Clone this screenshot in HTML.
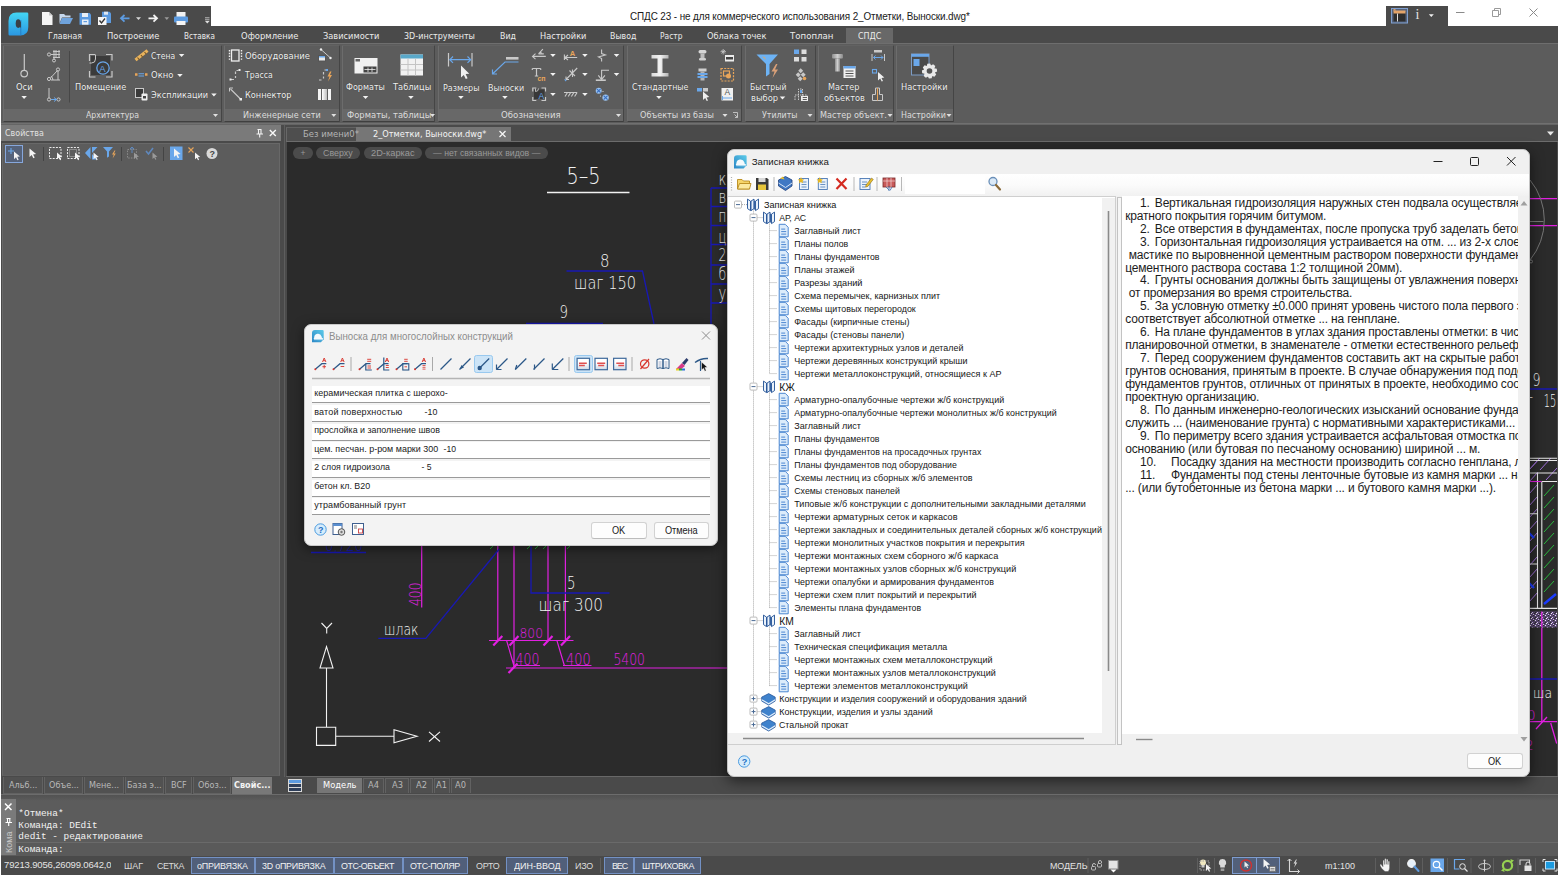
<!DOCTYPE html>
<html lang="ru"><head><meta charset="utf-8"><title>СПДС 23</title><style>
html,body{margin:0;padding:0}
body{width:1560px;height:877px;background:#fff;position:relative;overflow:hidden;font-family:"Liberation Sans",sans-serif;}
.t{position:absolute;white-space:pre;margin:0;padding:0;z-index:3}
.r{position:absolute;box-sizing:border-box}
svg{overflow:visible}
svg text{font-family:"Liberation Sans",sans-serif}
svg text.cad{font-family:"DejaVu Sans","Liberation Sans",sans-serif;font-weight:200}
</style></head><body>
<div class="r" style="left:1px;top:26px;width:1557px;height:849px;background:#4a4a4a;"></div>
<div class="r" style="left:1px;top:6px;width:210px;height:21px;background:#4a4a4a;"></div>
<div class="r" style="left:1386px;top:6px;width:62px;height:21px;background:#4a4a4a;"></div>
<div class="t " style="left:630.0px;top:10px;font-size:11.09px;line-height:12px;color:#1a1a1a;letter-spacing:-0.112px;transform:scale(0.8929,1.0000);transform-origin:0 50%;">СПДС 23 - не для коммерческого использования 2_Отметки, Выноски.dwg*</div>
<svg class="r" style="left:1462px;top:8px;" width="90" height="16" viewBox="0 0 90 16"><path d="M-6 4.500h8.500" stroke="#8a8a8a" fill="none"/><path d="M30.500 2.500h6v6h-6z M32.500 2.500v-2h6v6h-2" stroke="#9a9a9a" fill="none"/><path d="M67.5 0.5l8 8m0-8l-8 8" stroke="#8a8a8a" fill="none"/></svg>
<svg class="r" style="left:8px;top:12px;" width="21" height="24" viewBox="0 0 21 24"><defs><linearGradient id="lg" x1="0" y1="0" x2="0" y2="1"><stop offset="0" stop-color="#43d6f4"/><stop offset="1" stop-color="#2b97e2"/></linearGradient></defs><path d="M8.500 0.500h10.500q1.300 0 1.300 1.300v13.200q0 8.500-8.500 8.500h-10q-1.300 0-1.300-1.300v-13.200q0-8.500 8-8.500z" fill="url(#lg)"/><ellipse cx="10.200" cy="11.600" rx="2.500" ry="4.300" fill="#3a4047"/><path d="M12.800 8v15.500" stroke="#2a7fc4" stroke-width="1"/><path d="M12.300 9.500v6" stroke="#3a4047" stroke-width="1.200"/></svg>
<div class="r" style="left:846px;top:28px;width:47px;height:16px;background:#686868;"></div>
<div class="t " style="left:48.0px;top:31.0px;font-size:8.70px;line-height:10px;color:#ececec;letter-spacing:0.020px;font-family:'DejaVu Sans','Liberation Sans',sans-serif;transform:scale(0.9014,1.0000);transform-origin:0 50%;">Главная</div>
<div class="t " style="left:106.5px;top:31.0px;font-size:8.70px;line-height:10px;color:#ececec;letter-spacing:0.020px;font-family:'DejaVu Sans','Liberation Sans',sans-serif;transform:scale(0.9579,1.0000);transform-origin:0 50%;">Построение</div>
<div class="t " style="left:184.0px;top:31.0px;font-size:8.70px;line-height:10px;color:#ececec;letter-spacing:0.020px;font-family:'DejaVu Sans','Liberation Sans',sans-serif;transform:scale(0.8377,1.0000);transform-origin:0 50%;">Вставка</div>
<div class="t " style="left:240.5px;top:31.0px;font-size:8.70px;line-height:10px;color:#ececec;letter-spacing:0.020px;font-family:'DejaVu Sans','Liberation Sans',sans-serif;transform:scale(0.9663,1.0000);transform-origin:0 50%;">Оформление</div>
<div class="t " style="left:322.5px;top:31.0px;font-size:8.70px;line-height:10px;color:#ececec;letter-spacing:0.020px;font-family:'DejaVu Sans','Liberation Sans',sans-serif;transform:scale(0.9458,1.0000);transform-origin:0 50%;">Зависимости</div>
<div class="t " style="left:404.0px;top:31.0px;font-size:8.70px;line-height:10px;color:#ececec;letter-spacing:0.020px;font-family:'DejaVu Sans','Liberation Sans',sans-serif;transform:scale(0.9214,1.0000);transform-origin:0 50%;">3D-инструменты</div>
<div class="t " style="left:500.0px;top:31.0px;font-size:8.70px;line-height:10px;color:#ececec;letter-spacing:0.020px;font-family:'DejaVu Sans','Liberation Sans',sans-serif;transform:scale(0.9041,1.0000);transform-origin:0 50%;">Вид</div>
<div class="t " style="left:539.5px;top:31.0px;font-size:8.70px;line-height:10px;color:#ececec;letter-spacing:0.020px;font-family:'DejaVu Sans','Liberation Sans',sans-serif;transform:scale(0.9430,1.0000);transform-origin:0 50%;">Настройки</div>
<div class="t " style="left:610.0px;top:31.0px;font-size:8.70px;line-height:10px;color:#ececec;letter-spacing:0.020px;font-family:'DejaVu Sans','Liberation Sans',sans-serif;transform:scale(0.9013,1.0000);transform-origin:0 50%;">Вывод</div>
<div class="t " style="left:659.5px;top:31.0px;font-size:8.70px;line-height:10px;color:#ececec;letter-spacing:0.020px;font-family:'DejaVu Sans','Liberation Sans',sans-serif;transform:scale(0.8637,1.0000);transform-origin:0 50%;">Растр</div>
<div class="t " style="left:706.5px;top:31.0px;font-size:8.70px;line-height:10px;color:#ececec;letter-spacing:0.020px;font-family:'DejaVu Sans','Liberation Sans',sans-serif;transform:scale(0.9469,1.0000);transform-origin:0 50%;">Облака точек</div>
<div class="t " style="left:790.0px;top:31.0px;font-size:8.70px;line-height:10px;color:#ececec;letter-spacing:0.020px;font-family:'DejaVu Sans','Liberation Sans',sans-serif;transform:scale(0.9869,1.0000);transform-origin:0 50%;">Топоплан</div>
<div class="t " style="left:858.0px;top:31.0px;font-size:8.70px;line-height:10px;color:#ececec;letter-spacing:0.020px;font-family:'DejaVu Sans','Liberation Sans',sans-serif;transform:scale(0.9191,1.0000);transform-origin:0 50%;">СПДС</div>
<svg class="r" style="left:0px;top:0px;" width="1560" height="40" viewBox="0 0 1560 40"><path d="M42 12h7l3.500 3.500v9.500h-10.500z" fill="#f4f4f4"/><path d="M49 12v3.500h3.500z" fill="#c9c9c9"/><path d="M59.500 14h4.500l1.500 1.500h5v2h-8.500l-2.500 6z" fill="#c6d8ee"/><path d="M62 18h11l-3 6h-10.500z" fill="#6fa3dc"/><path d="M79.500 13h10l1.500 1.500v10.200h-11.500z" fill="#5d9be0"/><rect x="82" y="13" width="6" height="4" fill="#e8eef6"/><rect x="82" y="19.500" width="6.500" height="5.200" fill="#e8eef6"/><rect x="83.500" y="21" width="3.500" height="1.200" fill="#5d9be0"/><path d="M102 11.700h7.500l1.500 1.500v9.800h-9z" fill="#5d9be0"/><rect x="104" y="11.700" width="4" height="3" fill="#dfe8f4"/><rect x="98" y="17" width="8.500" height="8" fill="#f6f6f6"/><path d="M99.500 20.500l2 2.500 3.500-4.500" stroke="#333" stroke-width="1.300" fill="none"/><path d="M129.500 18.300h-8 M124.500 15l-3.500 3.300 3.500 3.300" stroke="#5d9be0" stroke-width="1.800" fill="none"/><path d="M136 17.300h5l-2.500 2.800z" fill="#d8d8d8"/><path d="M148.500 18.300h8 M153.500 15l3.500 3.300-3.500 3.300" stroke="#f4f4f4" stroke-width="1.800" fill="none"/><path d="M164.500 17.300h4.600l-2.300 2.600z" fill="#9a9a9a"/><rect x="176.500" y="12" width="9" height="5" fill="#f2f2f2"/><rect x="174" y="16.500" width="14" height="6" rx="1" fill="#5d9be0"/><rect x="176.500" y="21" width="9" height="4" fill="#f4f4f4"/><path d="M205 17.800h4.500 M205 19.800h4.500" stroke="#c8c8c8" stroke-width="0.900"/><path d="M205 21h4.600l-2.300 2.400z" fill="#e0e0e0"/><rect x="1391.500" y="8.500" width="16" height="14.500" fill="#55627a" stroke="#7f9fd0"/><rect x="1393.500" y="12" width="12" height="9.500" fill="#2e2e2e"/><rect x="1393.500" y="10.500" width="12" height="3" fill="#e3a46a"/><path d="M1397.500 13.500v8" stroke="#ddd"/><path d="M1393 10.500a1.500 1.500 0 0 1 3 0" fill="#e3a46a"/><path d="M1428.800 14.300h5l-2.500 2.800z" fill="#f0f0f0"/></svg>
<div class="t" style="left:1415.500px;top:7px;font-size:14px;line-height:16px;color:#e4e4e4;font-family:'Liberation Serif',serif">i</div>
<div class="r" style="left:1px;top:43px;width:1557px;height:1px;background:#6e6e6e;"></div>
<div class="r" style="left:1px;top:44px;width:1557px;height:79px;background:#5c5c5c;"></div>
<div class="r" style="left:1px;top:123px;width:1557px;height:1px;background:#707070;"></div>
<div class="r" style="left:3px;top:45px;width:218.5px;height:76.5px;background:#5c5c5c;border:1px solid;border-color:#626262 #454545 #3f3f3f #6c6c6c;border-radius:1px;"></div>
<div class="r" style="left:4px;top:109px;width:216.5px;height:11.5px;background:#686868;"></div>
<div class="t " style="left:85.5px;top:110.0px;font-size:8.70px;line-height:10px;color:#dcdcdc;letter-spacing:0.020px;font-family:'DejaVu Sans','Liberation Sans',sans-serif;transform:scale(0.8980,1.0000);transform-origin:0 50%;">Архитектура</div>
<div class="r" style="left:223.5px;top:45px;width:116px;height:76.5px;background:#5c5c5c;border:1px solid;border-color:#626262 #454545 #3f3f3f #6c6c6c;border-radius:1px;"></div>
<div class="r" style="left:224.5px;top:109px;width:114px;height:11.5px;background:#686868;"></div>
<div class="t " style="left:242.5px;top:110.0px;font-size:8.70px;line-height:10px;color:#dcdcdc;letter-spacing:0.020px;font-family:'DejaVu Sans','Liberation Sans',sans-serif;transform:scale(0.9286,1.0000);transform-origin:0 50%;">Инженерные сети</div>
<div class="r" style="left:342px;top:45px;width:93px;height:76.5px;background:#5c5c5c;border:1px solid;border-color:#626262 #454545 #3f3f3f #6c6c6c;border-radius:1px;"></div>
<div class="r" style="left:343px;top:109px;width:91px;height:11.5px;background:#686868;"></div>
<div class="t " style="left:347.0px;top:110.0px;font-size:8.70px;line-height:10px;color:#dcdcdc;letter-spacing:0.020px;font-family:'DejaVu Sans','Liberation Sans',sans-serif;transform:scale(0.9626,1.0000);transform-origin:0 50%;">Форматы, таблицы</div>
<div class="r" style="left:437.5px;top:45px;width:186.5px;height:76.5px;background:#5c5c5c;border:1px solid;border-color:#626262 #454545 #3f3f3f #6c6c6c;border-radius:1px;"></div>
<div class="r" style="left:438.5px;top:109px;width:184.5px;height:11.5px;background:#686868;"></div>
<div class="t " style="left:501.0px;top:110.0px;font-size:8.70px;line-height:10px;color:#dcdcdc;letter-spacing:0.020px;font-family:'DejaVu Sans','Liberation Sans',sans-serif;transform:scale(0.9889,1.0000);transform-origin:0 50%;">Обозначения</div>
<div class="r" style="left:626.5px;top:45px;width:115.5px;height:76.5px;background:#5c5c5c;border:1px solid;border-color:#626262 #454545 #3f3f3f #6c6c6c;border-radius:1px;"></div>
<div class="r" style="left:627.5px;top:109px;width:113.5px;height:11.5px;background:#686868;"></div>
<div class="t " style="left:640.0px;top:110.0px;font-size:8.70px;line-height:10px;color:#dcdcdc;letter-spacing:0.020px;font-family:'DejaVu Sans','Liberation Sans',sans-serif;transform:scale(0.9343,1.0000);transform-origin:0 50%;">Объекты из базы</div>
<div class="r" style="left:744.5px;top:45px;width:71.5px;height:76.5px;background:#5c5c5c;border:1px solid;border-color:#626262 #454545 #3f3f3f #6c6c6c;border-radius:1px;"></div>
<div class="r" style="left:745.5px;top:109px;width:69.5px;height:11.5px;background:#686868;"></div>
<div class="t " style="left:762.0px;top:110.0px;font-size:8.70px;line-height:10px;color:#dcdcdc;letter-spacing:0.020px;font-family:'DejaVu Sans','Liberation Sans',sans-serif;transform:scale(0.9055,1.0000);transform-origin:0 50%;">Утилиты</div>
<div class="r" style="left:818px;top:45px;width:76px;height:76.5px;background:#5c5c5c;border:1px solid;border-color:#626262 #454545 #3f3f3f #6c6c6c;border-radius:1px;"></div>
<div class="r" style="left:819px;top:109px;width:74px;height:11.5px;background:#686868;"></div>
<div class="t " style="left:820.0px;top:110.0px;font-size:8.70px;line-height:10px;color:#dcdcdc;letter-spacing:0.020px;font-family:'DejaVu Sans','Liberation Sans',sans-serif;transform:scale(0.9320,1.0000);transform-origin:0 50%;">Мастер объект.</div>
<div class="r" style="left:896px;top:45px;width:57.5px;height:76.5px;background:#5c5c5c;border:1px solid;border-color:#626262 #454545 #3f3f3f #6c6c6c;border-radius:1px;"></div>
<div class="r" style="left:897px;top:109px;width:55.5px;height:11.5px;background:#686868;"></div>
<div class="t " style="left:901.0px;top:110.0px;font-size:8.70px;line-height:10px;color:#dcdcdc;letter-spacing:0.020px;font-family:'DejaVu Sans','Liberation Sans',sans-serif;transform:scale(0.9125,1.0000);transform-origin:0 50%;">Настройки</div>
<div class="t " style="left:15.8px;top:82.0px;font-size:8.70px;line-height:10px;color:#f0f0f0;letter-spacing:0.020px;font-family:'DejaVu Sans','Liberation Sans',sans-serif;transform:scale(0.9628,1.0000);transform-origin:0 50%;text-shadow:0 0 1px #333;">Оси</div>
<div class="t" style="left:99.300px;top:63px;font-size:9.500px;line-height:11px;color:#6aa7ea">A</div>
<div class="t " style="left:75.0px;top:82.0px;font-size:8.70px;line-height:10px;color:#f0f0f0;letter-spacing:0.020px;font-family:'DejaVu Sans','Liberation Sans',sans-serif;transform:scale(0.9465,1.0000);transform-origin:0 50%;text-shadow:0 0 1px #333;">Помещение</div>
<div class="t " style="left:150.8px;top:51.0px;font-size:8.70px;line-height:10px;color:#f0f0f0;letter-spacing:0.020px;font-family:'DejaVu Sans','Liberation Sans',sans-serif;transform:scale(0.8763,1.0000);transform-origin:0 50%;text-shadow:0 0 1px #333;">Стена</div>
<div class="t " style="left:150.8px;top:70.0px;font-size:8.70px;line-height:10px;color:#f0f0f0;letter-spacing:0.020px;font-family:'DejaVu Sans','Liberation Sans',sans-serif;transform:scale(0.9701,1.0000);transform-origin:0 50%;text-shadow:0 0 1px #333;">Окно</div>
<div class="t " style="left:150.8px;top:90.0px;font-size:8.70px;line-height:10px;color:#f0f0f0;letter-spacing:0.020px;font-family:'DejaVu Sans','Liberation Sans',sans-serif;transform:scale(0.9369,1.0000);transform-origin:0 50%;text-shadow:0 0 1px #333;">Экспликации</div>
<div class="t " style="left:244.7px;top:51.0px;font-size:8.70px;line-height:10px;color:#f0f0f0;letter-spacing:0.020px;font-family:'DejaVu Sans','Liberation Sans',sans-serif;transform:scale(0.9710,1.0000);transform-origin:0 50%;text-shadow:0 0 1px #333;">Оборудование</div>
<div class="t " style="left:244.7px;top:70.0px;font-size:8.70px;line-height:10px;color:#f0f0f0;letter-spacing:0.020px;font-family:'DejaVu Sans','Liberation Sans',sans-serif;transform:scale(0.8914,1.0000);transform-origin:0 50%;text-shadow:0 0 1px #333;">Трасса</div>
<div class="t " style="left:244.7px;top:90.0px;font-size:8.70px;line-height:10px;color:#f0f0f0;letter-spacing:0.020px;font-family:'DejaVu Sans','Liberation Sans',sans-serif;transform:scale(0.9400,1.0000);transform-origin:0 50%;text-shadow:0 0 1px #333;">Коннектор</div>
<div class="t " style="left:346.3px;top:82.0px;font-size:8.70px;line-height:10px;color:#f0f0f0;letter-spacing:0.020px;font-family:'DejaVu Sans','Liberation Sans',sans-serif;transform:scale(0.9219,1.0000);transform-origin:0 50%;text-shadow:0 0 1px #333;">Форматы</div>
<div class="t " style="left:393.0px;top:82.0px;font-size:8.70px;line-height:10px;color:#f0f0f0;letter-spacing:0.020px;font-family:'DejaVu Sans','Liberation Sans',sans-serif;transform:scale(0.9537,1.0000);transform-origin:0 50%;text-shadow:0 0 1px #333;">Таблицы</div>
<div class="t " style="left:442.8px;top:83.0px;font-size:8.70px;line-height:10px;color:#f0f0f0;letter-spacing:0.020px;font-family:'DejaVu Sans','Liberation Sans',sans-serif;transform:scale(0.9231,1.0000);transform-origin:0 50%;text-shadow:0 0 1px #333;">Размеры</div>
<div class="t " style="left:487.7px;top:83.0px;font-size:8.70px;line-height:10px;color:#f0f0f0;letter-spacing:0.020px;font-family:'DejaVu Sans','Liberation Sans',sans-serif;transform:scale(0.9148,1.0000);transform-origin:0 50%;text-shadow:0 0 1px #333;">Выноски</div>
<div class="t" style="left:569.800px;top:48.500px;font-size:7.500px;line-height:9px;color:#e8a55a;font-weight:bold">A</div>
<div class="t" style="left:537.600px;top:74.800px;font-size:7px;line-height:8px;color:#e8a55a;font-weight:bold;letter-spacing:-0.200px">сп</div>
<div class="t" style="left:538.600px;top:90.500px;font-size:8.500px;line-height:10px;color:#6aa7ea">A</div>
<div class="t " style="left:631.5px;top:82.0px;font-size:8.70px;line-height:10px;color:#f0f0f0;letter-spacing:0.020px;font-family:'DejaVu Sans','Liberation Sans',sans-serif;transform:scale(0.9079,1.0000);transform-origin:0 50%;text-shadow:0 0 1px #333;">Стандартные</div>
<div class="t" style="left:724.500px;top:88px;font-size:8.500px;line-height:9px;color:#555">A</div>
<div class="t " style="left:749.5px;top:82.0px;font-size:8.70px;line-height:10px;color:#f0f0f0;letter-spacing:0.020px;font-family:'DejaVu Sans','Liberation Sans',sans-serif;transform:scale(0.8930,1.0000);transform-origin:0 50%;text-shadow:0 0 1px #333;">Быстрый</div>
<div class="t " style="left:750.8px;top:93.0px;font-size:8.70px;line-height:10px;color:#f0f0f0;letter-spacing:0.020px;font-family:'DejaVu Sans','Liberation Sans',sans-serif;transform:scale(0.9609,1.0000);transform-origin:0 50%;text-shadow:0 0 1px #333;">выбор</div>
<div class="t " style="left:828.0px;top:82.0px;font-size:8.70px;line-height:10px;color:#f0f0f0;letter-spacing:0.020px;font-family:'DejaVu Sans','Liberation Sans',sans-serif;transform:scale(0.9322,1.0000);transform-origin:0 50%;text-shadow:0 0 1px #333;">Мастер</div>
<div class="t " style="left:823.5px;top:93.0px;font-size:8.70px;line-height:10px;color:#f0f0f0;letter-spacing:0.020px;font-family:'DejaVu Sans','Liberation Sans',sans-serif;transform:scale(0.9508,1.0000);transform-origin:0 50%;text-shadow:0 0 1px #333;">объектов</div>
<div class="t " style="left:901.0px;top:82.0px;font-size:8.70px;line-height:10px;color:#f0f0f0;letter-spacing:0.020px;font-family:'DejaVu Sans','Liberation Sans',sans-serif;transform:scale(0.9490,1.0000);transform-origin:0 50%;text-shadow:0 0 1px #333;">Настройки</div>
<svg class="r" style="left:0px;top:0px;" width="1560" height="877" viewBox="0 0 1560 877"><path d="M213.0 114.0h5.0l-2.5 3.0z" fill="#e0e0e0"/><path d="M331.3 114.0h5.0l-2.5 3.0z" fill="#e0e0e0"/><path d="M430.0 114.0h5.0l-2.5 3.0z" fill="#e0e0e0"/><path d="M616.0 114.0h5.0l-2.5 3.0z" fill="#e0e0e0"/><path d="M722.5 114.0h5.0l-2.5 3.0z" fill="#e0e0e0"/><path d="M807.5 114.0h5.0l-2.5 3.0z" fill="#e0e0e0"/><path d="M887.5 114.0h5.0l-2.5 3.0z" fill="#e0e0e0"/><path d="M946.5 114.0h5.0l-2.5 3.0z" fill="#e0e0e0"/><path d="M24.3 54v16" stroke="#c9c9c9" stroke-width="1.2" fill="none"/><circle cx="24.2" cy="73.6" r="3.3" stroke="#c9c9c9" stroke-width="1.2" fill="none"/><path d="M21.4 95.9h5.5l-2.8 3.2z" fill="#f2f2f2"/><g stroke="#c9c9c9" stroke-width="1" fill="none"><circle cx="49" cy="54.5" r="1.6"/><path d="M51 54.5h3 M54 50v10 M53 51.5h7M53 54.5h7M53 57.5h7 M56 50v8 M59 50v8"/><circle cx="54" cy="60.5" r="1.5"/><circle cx="49" cy="79" r="1.6"/><circle cx="58" cy="69.5" r="1.6"/><path d="M50.5 78l7-7.5 M51 80h9 M58 71v9 M53 80a6 6 0 0 0-2-4"/><path d="M49 88v10"/><circle cx="49" cy="99.5" r="1.6"/><circle cx="58.5" cy="99.5" r="1.6"/></g><path d="M51 99.500h6 M54 97.500l2.500 2-2.500 2" stroke="#6aa7ea" fill="none"/><path d="M69.5 51v51.500" stroke="#474747" stroke-width="1"/><rect x="91" y="56" width="19" height="19" fill="#3b3b3b"/><path d="M89.500 61v-6.500h6 M106 54.500h6v6 M112 71v6h-6 M95.500 77h-6v-6" stroke="#c9c9c9" fill="none" stroke-width="1.200"/><path d="M95.500 55v4a4 4 0 0 1-4 4h-2" stroke="#c9c9c9" fill="none"/><circle cx="103" cy="68" r="6.200" stroke="#6aa7ea" stroke-width="1.300" fill="none"/><path d="M135.500 60l12-9.500" stroke="#e9b35c" stroke-width="3.200"/><path d="M137.500 57.500l2 2.500 M141 55l2 2.500 M144.500 52l2 2.500" stroke="#7a5a2a" stroke-width="1.200"/><path d="M178.9 53.9h5.5l-2.8 3.2z" fill="#f2f2f2"/><path d="M135 74.500h2.500 M145 74.500h2.500" stroke="#e8a55a" stroke-width="2.600"/><path d="M138.500 73.700h5.500 M138.500 76h5.500" stroke="#6aa7ea" stroke-width="1.100"/><path d="M177.2 73.9h5.5l-2.8 3.2z" fill="#f2f2f2"/><rect x="135.500" y="88.500" width="8" height="9" fill="#3a3a3a" stroke="#c9c9c9"/><rect x="141.500" y="93.500" width="6" height="7" rx="1" fill="#efefef" /><rect x="143" y="96" width="3" height="2.500" fill="#444"/><path d="M211.2 93.4h5.5l-2.8 3.2z" fill="#f2f2f2"/><rect x="231.500" y="50" width="7.500" height="11" fill="none" stroke="#efefef" stroke-width="1.300"/><path d="M229.500 50v11 M241.500 50v11" stroke="#efefef" stroke-width="1.400" stroke-dasharray="1.400 1.400"/><path d="M231 79.500h3 M235.500 78v-2 M235.500 74v-2.500 M236.500 70.500h2" stroke="#c9c9c9" stroke-width="1.200" fill="none"/><rect x="229.500" y="78.500" width="2" height="2" fill="#efefef"/><rect x="238.500" y="69" width="2" height="2" fill="#efefef"/><path d="M230.500 89l10 10" stroke="#c9c9c9" stroke-width="1.100"/><path d="M229.500 91.500v-3.500h3.500" stroke="#c9c9c9" fill="none"/><rect x="239.500" y="98" width="2.500" height="2.500" fill="#efefef"/><path d="M321 49.500l9 8" stroke="#c9c9c9"/><circle cx="321" cy="49.500" r="1.200" fill="#efefef"/><circle cx="330.500" cy="58" r="1.200" fill="#efefef"/><rect x="318.500" y="55.500" width="7" height="5.500" fill="#e9e9e9" stroke="#555"/><rect x="319" y="56" width="6" height="1.500" fill="#6aa7ea"/><path d="M319 80h2.500 M323.500 78.500v-2 M323.500 74.500v-2.500 M324.500 70h2" stroke="#c9c9c9" stroke-width="1.200"/><rect x="326" y="69" width="2" height="2" fill="#6aa7ea"/><path d="M330 71.500l-2.500 5h2l-1.500 5 4-6.500h-2l1.500-3.500z" fill="#e8a55a"/><defs><linearGradient id="colg" x1="0" x2="1"><stop offset="0" stop-color="#fff"/><stop offset="1" stop-color="#bdbdbd"/></linearGradient></defs><rect x="318" y="89" width="3" height="11" fill="#f4f4f4"/><rect x="322" y="89" width="5" height="11" fill="url(#colg)"/><rect x="328" y="89" width="3" height="11" fill="#f4f4f4"/><path d="M362.8 95.9h5.5l-2.8 3.2z" fill="#f2f2f2"/><path d="M408.2 95.9h5.5l-2.8 3.2z" fill="#f2f2f2"/><rect x="354.500" y="58" width="23" height="15.500" fill="#f1f1f1"/><rect x="355.500" y="59" width="4.500" height="2.500" fill="#666"/><rect x="363.500" y="66.500" width="13" height="6" fill="#444"/><path d="M364.500 69.500h11 M368 67.500v4.500 M372 67.500v4.500" stroke="#eee" stroke-width="0.800"/><rect x="400.500" y="54.500" width="22.500" height="21" fill="#f2f2f2"/><rect x="400.500" y="54.500" width="22.500" height="4" fill="#59a8c9"/><path d="M400.500 64.500h22.500 M400.500 70h22.500 M408 58.500v17 M415.500 58.500v17" stroke="#c4c4c4" stroke-width="1"/><path d="M448.500 53v13.500 M472 53v13.500" stroke="#c9c9c9" stroke-width="1.200"/><path d="M450 59.700h20.500 M453 56.500l-3.200 3.200 3.200 3.200 M467.500 56.500l3.200 3.200-3.200 3.200" stroke="#6aa7ea" stroke-width="1.200" fill="none"/><path d="M461 65.500l0 12 2.800-2.600 2 4.200 1.800-.9-2-4.100 3.700-.4z" fill="#efefef"/><path d="M458.2 95.9h5.5l-2.8 3.2z" fill="#f2f2f2"/><rect x="506" y="57" width="12.500" height="2.600" fill="#c9c9c9"/><path d="M518.500 62h-13.500l-12 11.500 M492.500 69.500v4.500h4.500" stroke="#6aa7ea" stroke-width="1.200" fill="none"/><path d="M502.2 95.9h5.5l-2.8 3.2z" fill="#f2f2f2"/><g stroke="#c9c9c9" stroke-width="1.100" fill="none"><path d="M532.500 56.400h13.300 M535.500 53.700l-3 2.700 3 2.700 M538.500 53.900l4.400-4.800 M538.500 53.900h5.300 M540.500 52a2.500 2.500 0 0 1 .8 1.900"/><path d="M564.400 54.400v5.600 M565 57.500h12.200 M568 55l-3 2.500 3 2.500"/><path d="M601.600 49.500v4l3.900 1.500-7 2 3.100 1.500v3"/><path d="M532.300 68.500h8.400 M536.500 68.500v7.500 M532.300 68.500v1.500 M540.700 68.500v1.500 M534.800 76h3.400" stroke-width="1.200"/><path d="M566 79.500l11.200-11.500 M569.500 70.500l5.500 5.500 M572.500 69.500v7.500 M566 79.500v-3 M566 79.500h3"/><path d="M601.600 79.500v-9.200h7.400 M598.300 75.300l3.300 4.200 3.300-4.200"/><path d="M595.800 80.200h10" stroke-width="1.600"/><path d="M532.800 91.500v-3.500h3.500 M541.500 88h4v3.500 M545.500 97v3.500h-4 M536.300 100.500h-3.500v-3.500" stroke-width="1.200"/><path d="M564 92.500h13.200 M565 96.500l2.500-4 M568.200 96.500l2.500-4 M571.400 96.500l2.500-4 M574.600 96.500l2.500-4"/></g><rect x="534" y="89.500" width="10.500" height="9.500" fill="#383838"/><path d="M535.500 88.500v3a3 3 0 0 0 3-3" stroke="#c9c9c9" fill="none" stroke-width="0.900"/><path d="M565.800 79.800l-.8.800" stroke="#6aa7ea" stroke-width="2.200"/><circle cx="598.700" cy="90.700" r="3" fill="#9cc4f0"/><circle cx="605.600" cy="97.600" r="3.200" fill="#9cc4f0"/><path d="M596.800 88.800l3.800 3.800 M600.600 88.800l-3.800 3.800 M603.600 95.600l4 4 M607.600 95.600l-4 4" stroke="#3a6fc0" stroke-width="1.100"/><circle cx="603" cy="91.500" r="0.600" fill="#ddd"/><circle cx="600.500" cy="96" r="0.600" fill="#ddd"/><path d="M550.2 53.9h5.5l-2.8 3.2z" fill="#f2f2f2"/><path d="M550.2 72.9h5.5l-2.8 3.2z" fill="#f2f2f2"/><path d="M582.2 53.9h5.5l-2.8 3.2z" fill="#f2f2f2"/><path d="M582.2 72.9h5.5l-2.8 3.2z" fill="#f2f2f2"/><path d="M613.8 53.9h5.5l-2.8 3.2z" fill="#f2f2f2"/><path d="M613.8 72.9h5.5l-2.8 3.2z" fill="#f2f2f2"/><path d="M550.2 92.9h5.5l-2.8 3.2z" fill="#f2f2f2"/><path d="M582.2 92.9h5.5l-2.8 3.2z" fill="#f2f2f2"/><defs><linearGradient id="ibeam" x1="0" x2="1"><stop offset="0" stop-color="#d9d9d9"/><stop offset="0.500" stop-color="#f3f3f3"/><stop offset="1" stop-color="#b5b5b5"/></linearGradient></defs><path d="M651.500 55h17v3.500h-6v14.500h6v3.500h-17v-3.500h6v-14.500h-6z" fill="url(#ibeam)"/><path d="M656.2 95.9h5.5l-2.8 3.2z" fill="#f2f2f2"/><rect x="698.500" y="50" width="8" height="3.500" rx="1.700" fill="#d6d6d6"/><rect x="700.500" y="53.500" width="4" height="4.500" fill="#bdbdbd"/><rect x="699" y="58" width="7" height="2.500" rx="1.200" fill="#d0d0d0"/><rect x="698.500" y="68.500" width="8" height="3" fill="#cfcfcf"/><rect x="700.500" y="71.500" width="4" height="9" fill="#b5b5b5"/><rect x="697.500" y="73" width="10" height="2" fill="#6aa7ea"/><rect x="697.500" y="76" width="10" height="2" fill="#6aa7ea"/><rect x="697" y="88" width="5" height="3.500" fill="#6aa7ea"/><rect x="703" y="88" width="5" height="3.500" fill="#c9c9c9"/><path d="M703 91.500v8.500l2.200-2 1.500 3 1.300-.6-1.500-3 2.800-.3z" fill="#efefef"/><path d="M721.500 50l3.500 3.500 M725 50l-3.500 3.500 M720.500 51.700h5.500M723.200 49v5.500" stroke="#c9c9c9" stroke-width="0.800"/><rect x="725" y="55" width="9" height="6.500" fill="#ececec"/><rect x="726" y="57" width="7" height="2.500" fill="#444"/><rect x="721" y="68.500" width="12.500" height="12.500" fill="none" stroke="#e8a55a" stroke-width="1.200" stroke-dasharray="2 1.200"/><rect x="723.500" y="71" width="6" height="5" fill="none" stroke="#e8a55a" stroke-width="1.200"/><circle cx="728.500" cy="76" r="2.500" fill="#e8a55a"/><rect x="721.500" y="88" width="11.500" height="12.500" fill="#f0f0f0"/><path d="M722.500 98h9.500 M722.500 96v4" stroke="#6aa7ea" stroke-width="1"/><path d="M733 112.500h4.500v4.500 M734.500 114.500l3 3 M737.500 115v2.500h-2.500" stroke="#c9c9c9" fill="none" stroke-width="0.900"/><path d="M756.500 54.500h21.500l-8.500 9.500v10l-3.500 2.500v-12.500z" fill="#6db3f5"/><path d="M762 56.500l3 .5 1 3z" fill="#e8a55a" opacity=".7"/><path d="M776 64l-4.500 7.500h3l-2 6.500 5.500-8.500h-3l2.500-5.500z" fill="#d9a078"/><path d="M779.8 96.4h5.5l-2.8 3.2z" fill="#f2f2f2"/><rect x="794" y="49.500" width="5" height="4.500" fill="#6aa7ea"/><rect x="801.500" y="49.500" width="5" height="4.500" fill="#ddd"/><rect x="794" y="57" width="5" height="4.500" fill="#ddd"/><rect x="801.500" y="57" width="5" height="4.500" fill="#ddd"/><g fill="#c8c8c8"><rect x="799" y="69" width="3.500" height="3.500" transform="rotate(45 800.700 70.700)"/><rect x="796.500" y="73" width="3.500" height="3.500" transform="rotate(45 798.200 74.700)"/><rect x="801.500" y="73" width="3.500" height="3.500" transform="rotate(45 803.200 74.700)"/><rect x="798.500" y="77" width="3.500" height="3.500" transform="rotate(45 800.200 78.700)"/></g><circle cx="804.500" cy="78.500" r="1.800" fill="#e8a55a"/><g stroke="#c9c9c9" stroke-width="1" fill="none" stroke-dasharray="1.500 1"><path d="M798.500 100v-11h4v11 M795 100v-5h12v5"/></g><rect x="800" y="90" width="2" height="3" fill="#6aa7ea"/><rect x="801.500" y="96.500" width="6" height="4" fill="none" stroke="#eee"/><path d="M801.500 98.500h6" stroke="#eee"/><defs><linearGradient id="bolt" x1="0" x2="1"><stop offset="0" stop-color="#8e8e8e"/><stop offset="0.500" stop-color="#cfcfcf"/><stop offset="1" stop-color="#8a8a8a"/></linearGradient></defs><rect x="832" y="54" width="11" height="4.500" rx="1" fill="url(#bolt)"/><rect x="835" y="58.500" width="5" height="13" fill="url(#bolt)"/><rect x="843.500" y="66" width="12" height="12" fill="#f1f1f1"/><rect x="843.500" y="66" width="12" height="2.500" fill="#6aa7ea"/><path d="M845.500 71h8 M845.500 73.500h8 M845.500 76h8" stroke="#555" stroke-width="1"/><rect x="874" y="50" width="8" height="2.500" fill="#c9c9c9"/><path d="M872 54v7 M884.500 54v7" stroke="#c9c9c9"/><path d="M873.500 57.500h9.500 M875.500 55.500l-2 2 2 2 M881 55.500l2 2-2 2" stroke="#6aa7ea" fill="none"/><rect x="872.500" y="69.500" width="4" height="3.500" fill="none" stroke="#6aa7ea" stroke-width="1.100"/><path d="M878 72v8.500l2.200-2 1.500 3 1.300-.6-1.500-3 2.800-.3z" fill="#efefef"/><path d="M872.500 100.500v-6h3v-6.500h4v6.500h3v6h-10z" stroke="#c9c9c9" fill="none"/><path d="M877.500 88v12.500" stroke="#e8a55a"/><rect x="911.500" y="54" width="17.500" height="21" fill="#4a4a4a" stroke="#7c9cc6" stroke-width="1"/><rect x="911.500" y="54" width="17.500" height="2.800" fill="#6aa7ea"/><rect x="913.500" y="59" width="6" height="7" fill="#6aa7ea"/><polygon points="936.8,68.8 937.1,71.6 934.9,72.6 934.9,72.5 936.2,74.6 934.4,76.8 932.1,75.9 932.2,75.9 931.7,78.3 928.9,78.6 927.9,76.4 928.0,76.4 925.9,77.7 923.7,75.9 924.6,73.6 924.6,73.7 922.2,73.2 921.9,70.4 924.1,69.4 924.1,69.5 922.8,67.4 924.6,65.2 926.9,66.1 926.8,66.1 927.3,63.7 930.1,63.4 931.1,65.6 931.0,65.6 933.1,64.3 935.3,66.1 934.4,68.4 934.4,68.3" fill="#e9e9e9"/><circle cx="929.5" cy="71.0" r="2.800" fill="#555"/></svg>
<div class="r" style="left:1px;top:124px;width:1557px;height:671px;background:#4a4a4a;"></div>
<div class="r" style="left:1px;top:124px;width:1557px;height:1px;background:#656565;"></div>
<div class="r" style="left:1px;top:125px;width:280px;height:16px;background:#7a7a7a;"></div>
<div class="t " style="left:4.6px;top:128.0px;font-size:8.70px;line-height:10px;color:#e2e2e2;letter-spacing:0.020px;font-family:'DejaVu Sans','Liberation Sans',sans-serif;transform:scale(0.9144,1.0000);transform-origin:0 50%;">Свойства</div>
<div class="r" style="left:2px;top:143px;width:278px;height:633px;background:#5c5c5c;border:1px solid #686868;border-bottom-color:#606060"></div>
<div class="t" style="left:209.400px;top:148.500px;font-size:9px;line-height:10px;color:#444;font-weight:bold">?</div>
<svg class="r" style="left:0px;top:0px;" width="300" height="170" viewBox="0 0 300 170"><path d="M257.500 129.500h4 M258.500 129.500v4.500 M261 129.500v4.500 M256.500 134h6.500 M259.700 134v3.500" stroke="#f4f4f4" stroke-width="1.100" fill="none"/><path d="M269.800 130l6 6 M275.800 130l-6 6" stroke="#f8f8f8" stroke-width="1.400"/><rect x="5.500" y="145.500" width="17" height="17" fill="#55627a" stroke="#86a7dc"/><path d="M8 151h6 M11 148v6" stroke="#6aa7ea" stroke-width="1.100"/><path transform="translate(14.0 151.5) scale(0.90)" d="M0 0v8.500l2.200-2 1.600 3.300 1.400-.7-1.600-3.200 3-.3z" fill="#f4f4f4"/><path transform="translate(29.5 148.5) scale(1.00)" d="M0 0v8.500l2.200-2 1.600 3.300 1.400-.7-1.600-3.200 3-.3z" fill="#f4f4f4"/><path d="M43.500 147v14" stroke="#444"/><path d="M121.500 147v14" stroke="#444"/><path d="M163.500 147v14" stroke="#444"/><rect x="49.500" y="147.500" width="11.500" height="11" fill="none" stroke="#ececec" stroke-dasharray="2 1.200"/><path transform="translate(57.0 152.5) scale(0.80)" d="M0 0v8.500l2.200-2 1.600 3.300 1.400-.7-1.600-3.200 3-.3z" fill="#f4f4f4"/><rect x="67.500" y="147.500" width="11.500" height="11" fill="none" stroke="#ececec" stroke-dasharray="2 1.200"/><rect x="69.500" y="149.500" width="7" height="7" fill="none" stroke="#bbb" stroke-dasharray="1 1"/><path transform="translate(75.0 152.5) scale(0.80)" d="M0 0v8.500l2.200-2 1.600 3.300 1.400-.7-1.600-3.200 3-.3z" fill="#f4f4f4"/><path d="M85 153l5.500-6v12z M92 147h5.500l-5.500 6z M92 159.500v-5.500l5 5.500z" fill="#6aa7ea"/><path transform="translate(93.5 152.5) scale(0.80)" d="M0 0v8.500l2.200-2 1.600 3.300 1.400-.7-1.600-3.200 3-.3z" fill="#f4f4f4"/><path d="M103 147h10l-4 4.500v5l-2 1.200v-6.200z" fill="#6aa7ea"/><path d="M114.500 150.500l-2.500 4h1.800l-1.200 4 3.200-5h-1.800l1.400-3z" fill="#e8a55a"/><rect x="127.500" y="149.500" width="9" height="8.500" fill="none" stroke="#8a8a8a" stroke-dasharray="1.500 1.200"/><path d="M132 147v6 M130 149l2-2 2 2" stroke="#5f88bd" fill="none"/><path transform="translate(134.0 152.5) scale(0.75)" d="M0 0v8.500l2.200-2 1.600 3.300 1.400-.7-1.600-3.200 3-.3z" fill="#9a9a9a"/><path d="M146 151l2.500 3 4.500-6" stroke="#5f88bd" stroke-width="1.600" fill="none"/><path transform="translate(152.5 152.5) scale(0.75)" d="M0 0v8.500l2.200-2 1.600 3.300 1.400-.7-1.600-3.200 3-.3z" fill="#9a9a9a"/><rect x="170" y="146.500" width="12.500" height="13.500" fill="#6aa7ea"/><path transform="translate(174.0 148.5) scale(1.00)" d="M0 0v8.500l2.200-2 1.600 3.300 1.400-.7-1.600-3.200 3-.3z" fill="#f4f4f4"/><path d="M188.500 147.500l5 5 M193.500 147.500l-5 5" stroke="#e8a55a" stroke-width="1.100"/><path transform="translate(195.0 152.5) scale(0.80)" d="M0 0v8.500l2.200-2 1.600 3.300 1.400-.7-1.600-3.200 3-.3z" fill="#f4f4f4"/><circle cx="212" cy="153.500" r="5.500" fill="#d9d9d9"/></svg>
<div class="r" style="left:3px;top:777px;width:40px;height:17px;background:#515151;border:1px solid #626262;border-top:none;"></div>
<div class="t " style="left:8.9px;top:780.0px;font-size:8.70px;line-height:10px;color:#b9b9b9;letter-spacing:0.020px;font-family:'DejaVu Sans','Liberation Sans',sans-serif;transform:scale(0.9320,1.0000);transform-origin:0 50%;">Альб...</div>
<div class="r" style="left:44px;top:777px;width:39px;height:17px;background:#515151;border:1px solid #626262;border-top:none;"></div>
<div class="t " style="left:48.6px;top:780.0px;font-size:8.70px;line-height:10px;color:#b9b9b9;letter-spacing:0.020px;font-family:'DejaVu Sans','Liberation Sans',sans-serif;transform:scale(0.9320,1.0000);transform-origin:0 50%;">Объе...</div>
<div class="r" style="left:84px;top:777px;width:40px;height:17px;background:#515151;border:1px solid #626262;border-top:none;"></div>
<div class="t " style="left:89.0px;top:780.0px;font-size:8.70px;line-height:10px;color:#b9b9b9;letter-spacing:0.020px;font-family:'DejaVu Sans','Liberation Sans',sans-serif;transform:scale(0.9320,1.0000);transform-origin:0 50%;">Мене...</div>
<div class="r" style="left:125px;top:777px;width:39px;height:17px;background:#515151;border:1px solid #626262;border-top:none;"></div>
<div class="t " style="left:127.2px;top:780.0px;font-size:8.70px;line-height:10px;color:#b9b9b9;letter-spacing:0.020px;font-family:'DejaVu Sans','Liberation Sans',sans-serif;transform:scale(0.9320,1.0000);transform-origin:0 50%;">База э...</div>
<div class="r" style="left:165px;top:777px;width:27px;height:17px;background:#515151;border:1px solid #626262;border-top:none;"></div>
<div class="t " style="left:170.6px;top:780.0px;font-size:8.70px;line-height:10px;color:#b9b9b9;letter-spacing:0.020px;font-family:'DejaVu Sans','Liberation Sans',sans-serif;transform:scale(0.9320,1.0000);transform-origin:0 50%;">BCF</div>
<div class="r" style="left:193px;top:777px;width:38px;height:17px;background:#515151;border:1px solid #626262;border-top:none;"></div>
<div class="t " style="left:197.8px;top:780.0px;font-size:8.70px;line-height:10px;color:#b9b9b9;letter-spacing:0.020px;font-family:'DejaVu Sans','Liberation Sans',sans-serif;transform:scale(0.9320,1.0000);transform-origin:0 50%;">Обоз...</div>
<div class="r" style="left:232px;top:777px;width:40px;height:17px;background:#787878;"></div>
<div class="t " style="left:234.1px;top:780.0px;font-size:8.70px;line-height:10px;color:#f4f4f4;letter-spacing:0.020px;font-family:'DejaVu Sans','Liberation Sans',sans-serif;transform:scale(0.9320,1.0000);transform-origin:0 50%;font-weight:bold;">Свойс...</div>
<div class="r" style="left:284px;top:125px;width:1px;height:652px;background:#5e5e5e;"></div>
<div class="r" style="left:286px;top:125px;width:1272px;height:16px;background:#4a4a4a;"></div>
<div class="r" style="left:286px;top:127px;width:70px;height:14px;background:#4e4e4e;border-left:1px solid #686868;border-top:1px solid #626262;"></div>
<div class="r" style="left:287px;top:127px;width:69px;height:14px;overflow:hidden"></div>
<div class="t " style="left:302.5px;top:129.0px;font-size:8.70px;line-height:10px;color:#b4b4b4;letter-spacing:0.020px;font-family:'DejaVu Sans','Liberation Sans',sans-serif;transform:scale(0.9700,1.0000);transform-origin:0 50%;">Без имени0*</div>
<div class="r" style="left:356px;top:127px;width:155px;height:14px;background:#767676;"></div>
<div class="t " style="left:373.0px;top:129.0px;font-size:8.70px;line-height:10px;color:#f4f4f4;letter-spacing:0.020px;font-family:'DejaVu Sans','Liberation Sans',sans-serif;transform:scale(0.9419,1.0000);transform-origin:0 50%;">2_Отметки, Выноски.dwg*</div>
<div class="r" style="left:286px;top:141px;width:1272px;height:1px;background:#6c6c6c;"></div>
<div class="r" style="left:287px;top:142px;width:1270px;height:634px;background:#2b2b2b;"></div>
<div class="r" style="left:286px;top:776px;width:1272px;height:1px;background:#686868;"></div>
<div class="r" style="left:292.5px;top:146.5px;width:20.5px;height:12.5px;background:#4b4b4b;border-radius:6.500px"></div>
<div class="t " style="left:300.5px;top:148px;font-size:8.55px;line-height:10px;color:#999999;letter-spacing:-0.993px;">+</div>
<div class="r" style="left:316px;top:146.5px;width:44px;height:12.5px;background:#4b4b4b;border-radius:6.500px"></div>
<div class="t " style="left:323.0px;top:148px;font-size:8.82px;line-height:10px;color:#999999;letter-spacing:0.020px;">Сверху</div>
<div class="r" style="left:363.5px;top:146.5px;width:58.5px;height:12.5px;background:#4b4b4b;border-radius:6.500px"></div>
<div class="t " style="left:371.0px;top:148px;font-size:9.26px;line-height:10px;color:#999999;letter-spacing:0.020px;">2D-каркас</div>
<div class="r" style="left:425px;top:146.5px;width:122.5px;height:12.5px;background:#4b4b4b;border-radius:6.500px"></div>
<div class="t " style="left:433.0px;top:148px;font-size:8.70px;line-height:10px;color:#999999;letter-spacing:0.020px;">— нет связанных видов —</div>
<svg class="r" style="left:0;top:0;overflow:hidden" width="1557" height="776" viewBox="0 0 1557 776"><path d="M499.500 131l6 6 M505.500 131l-6 6" stroke="#f4f4f4" stroke-width="1.300"/><path d="M1547 131.500h7l-3.500 4z" fill="#e8e8e8"/><text x="566.5" y="184.0" font-size="23.0" fill="#f2f2f2" textLength="34.0" lengthAdjust="spacingAndGlyphs"  class="cad">5–5</text><path d="M547 192.500h82.500" stroke="#f2f2f2" stroke-width="1.300"/><text x="600.0" y="266.8" font-size="17.5" fill="#f2f2f2" textLength="9.5" lengthAdjust="spacingAndGlyphs"  class="cad">8</text><path d="M566.500 271h76l11.500 53" stroke="#1818b4" stroke-width="1.300" fill="none"/><text x="574.0" y="288.8" font-size="17.5" fill="#f2f2f2" textLength="62.0" lengthAdjust="spacingAndGlyphs"  class="cad">шаг 150</text><text x="559.5" y="318.3" font-size="17.5" fill="#f2f2f2" textLength="8.5" lengthAdjust="spacingAndGlyphs"  class="cad">9</text><path d="M526 323.500h77" stroke="#1818b4" stroke-width="1.300"/><path d="M711 188v140 M711 188h18 M711 206.500h18 M711 225.500h18 M711 244.500h18 M711 265h18 M711 284h18 M711 303h18" stroke="#1818b4" stroke-width="1.300" fill="none"/><text x="718.5" y="184.5" font-size="17.5" fill="#f2f2f2" textLength="7.8" lengthAdjust="spacingAndGlyphs"  class="cad">к</text><text x="718.5" y="202.8" font-size="17.5" fill="#f2f2f2" textLength="7.8" lengthAdjust="spacingAndGlyphs"  class="cad">в</text><text x="718.5" y="222.0" font-size="17.5" fill="#f2f2f2" textLength="7.8" lengthAdjust="spacingAndGlyphs"  class="cad">п</text><text x="718.5" y="242.5" font-size="17.5" fill="#f2f2f2" textLength="7.8" lengthAdjust="spacingAndGlyphs"  class="cad">ц</text><text x="718.5" y="261.0" font-size="17.5" fill="#f2f2f2" textLength="7.8" lengthAdjust="spacingAndGlyphs"  class="cad">2</text><text x="718.5" y="280.0" font-size="17.5" fill="#f2f2f2" textLength="7.8" lengthAdjust="spacingAndGlyphs"  class="cad">б</text><text x="718.5" y="298.5" font-size="17.5" fill="#f2f2f2" textLength="7.8" lengthAdjust="spacingAndGlyphs"  class="cad">у</text><path d="M311 552.500h55" stroke="#1818b4" stroke-width="1.300"/><g stroke="#e020e0" stroke-width="1.200" fill="none"><path d="M421.700 540v67.500 M497.800 540v101 M514 540v128 M548 540v101 M565.400 540v101 M489 640.500h84.500 M506 668h225 M506.700 640.800l7.300 25.200 M514 665.500h26 M557 640.800l7.500 25.200 M563 665.500h28.500"/></g><g stroke="#e020e0" stroke-width="2.200"><path d="M493.300 645.500l9-9.500 M509.500 645.500l9-9.500 M543.500 645.500l9-9.500 M561 645.500l9-9.500 M508.500 673l9-9.500"/></g><path d="M499.300 549l-73.500 89.300h-47.500" stroke="#1818b4" stroke-width="1.300" fill="none"/><path d="M531 540v53h78.500" stroke="#1818b4" stroke-width="1.300" fill="none"/><g stroke="#22aa33" stroke-width="1"><path d="M490 549l4-4 M527 549l4-4 M535 549l4-4 M543 549l4-4 M567 549l4-4"/></g><text x="325.0" y="551.0" font-size="15.5" fill="#1818b4" textLength="38.0" lengthAdjust="spacingAndGlyphs"  class="cad">0,720</text><text x="567.0" y="589.3" font-size="17.5" fill="#f2f2f2" textLength="8.5" lengthAdjust="spacingAndGlyphs"  class="cad">5</text><text x="538.5" y="611.3" font-size="17.5" fill="#f2f2f2" textLength="64.5" lengthAdjust="spacingAndGlyphs"  class="cad">шаг 300</text><text x="384.0" y="635.2" font-size="15.5" fill="#f2f2f2" textLength="34.5" lengthAdjust="spacingAndGlyphs"  class="cad">шлак</text><text x="519.5" y="638.0" font-size="14.5" fill="#e020e0" textLength="23.5" lengthAdjust="spacingAndGlyphs"  class="cad">800</text><text x="515.6" y="664.5" font-size="15.5" fill="#e020e0" textLength="23.7" lengthAdjust="spacingAndGlyphs"  class="cad">400</text><text x="566.0" y="664.5" font-size="15.5" fill="#e020e0" textLength="24.6" lengthAdjust="spacingAndGlyphs"  class="cad">400</text><text x="613.4" y="664.5" font-size="15.5" fill="#e020e0" textLength="31.6" lengthAdjust="spacingAndGlyphs"  class="cad">5400</text><text class="cad" transform="translate(420.500 606) rotate(-90)" font-size="15.500" fill="#e020e0" textLength="23.500" lengthAdjust="spacingAndGlyphs">400</text><g stroke="#f2f2f2" stroke-width="1.100" fill="none"><path d="M326.500 668v59.300 M326.500 646.700l-6.500 21.300h13z M316.500 727.300h19.200v18.100h-19.200z M335.700 736.200h58.300 M417 736.200l-23-6.500v13z"/><path d="M321.500 623l5.200 5.500 5.300-5.500 M326.700 628.500v5 M429 731.800l11 9.700 M440 731.800l-11 9.700"/></g><g stroke="#e020e0" stroke-width="1.300" fill="none"><path d="M1529 198.700h29 M1529 225.700h29 M1541.800 628v94 M1529 721.700h29 M1536 729l11-12 M1550.700 723l6 20.500"/></g><g stroke="#777" stroke-width="1" fill="none"><path d="M1530 180A63 63 0 0 1 1530 260 M1529 221.500h14.500"/><circle cx="1531" cy="261.500" r="1.500"/></g><text x="1532.5" y="385.8" font-size="17.5" fill="#f2f2f2" textLength="8.0" lengthAdjust="spacingAndGlyphs"  class="cad">9</text><path d="M1529 389h29 M1529 679h29" stroke="#1818b4" stroke-width="1.600"/><text x="1524.5" y="406.8" font-size="17.5" fill="#f2f2f2"  class="cad">г</text><text x="1543.8" y="406.8" font-size="17.5" fill="#f2f2f2" textLength="12.5" lengthAdjust="spacingAndGlyphs"  class="cad">15</text><text x="1533.0" y="697.5" font-size="14.5" fill="#f2f2f2" textLength="19.0" lengthAdjust="spacingAndGlyphs"  class="cad">ша</text><text x="1527.0" y="719.5" font-size="13.5" fill="#e020e0"  class="cad">0</text><text x="1525.0" y="749.5" font-size="13.5" fill="#e020e0"  class="cad">2</text><path d="M1529 470l9-10 M1529 482l9-10 M1529 494l9-10 M1529 506l9-10 M1529 518l9-10 M1529 530l9-10 M1529 542l9-10 M1529 554l9-10 M1529 566l9-10 M1529 578l9-10 M1529 590l9-10 M1529 602l9-10 M1540 470l11-12 M1546 480l11-12 M1529 470l11-12" stroke="#a070d8" stroke-width="1" fill="none"/><path d="M1544 496l10-11 M1544 508l10-11 M1544 520l10-11 M1544 532l10-11 M1544 544l10-11 M1544 556l10-11 M1544 568l10-11 M1544 580l10-11 M1544 592l10-11 " stroke="#28b83c" stroke-width="1" fill="none"/><g stroke="#e8e8e8" stroke-width="1.100" fill="none"><path d="M1529 458.300h29 M1529 460.500h29 M1529 473h29 M1541.800 481.500h16 M1537.500 473v135 M1541.800 481.500v127 M1529 608.400h29 M1529 513.800h8.500 M1529 564h8.500"/></g><path d="M1529 481.500h12.500" stroke="#e020e0" stroke-width="1.100"/><path d="M1529 533l5 5 M1529 583l5 5 M1544 604l12-10" stroke="#1a3cff" stroke-width="2.400"/><defs><pattern id="stip" width="5" height="5" patternUnits="userSpaceOnUse"><rect width="5" height="5" fill="#5b4a72"/><rect x="0" y="0" width="1" height="1" fill="#efe6fa"/><rect x="2" y="2" width="1" height="1" fill="#d9c4f2"/><rect x="3" y="0" width="1" height="1" fill="#2b2b2b"/><rect x="1" y="3" width="1" height="1" fill="#f4f0fa"/><rect x="4" y="3" width="1" height="1" fill="#2b2b2b"/><rect x="3" y="4" width="1" height="1" fill="#cdb4ee"/><rect x="0" y="2" width="1" height="1" fill="#2b2b2b"/></pattern></defs><rect x="1529" y="611.500" width="29" height="16" fill="url(#stip)"/><path d="M1541.800 611.500v16" stroke="#e020e0" stroke-width="1.200"/></svg>
<div class="r" style="left:304px;top:324px;width:414px;height:222px;background:#f3f3f3;border-radius:7px;border:1px solid #c9c9c9;box-shadow:0 3px 12px rgba(0,0,0,.5);"></div>
<div class="t " style="left:328.5px;top:331px;font-size:10.28px;line-height:11px;color:#8c8c8c;letter-spacing:0.020px;transform:scale(0.9434,1.0000);transform-origin:0 50%;">Выноска для многослойных конструкций</div>
<div class="r" style="left:312px;top:386px;width:398px;height:16px;background:#ffffff;"></div>
<div class="r" style="left:312px;top:402px;width:398px;height:1px;background:#9a9a9a;"></div>
<div class="t " style="left:314.2px;top:388px;font-size:8.98px;line-height:10px;color:#1a1a1a;letter-spacing:0.020px;">керамическая плитка с шерохо-</div>
<div class="r" style="left:312px;top:405px;width:398px;height:16px;background:#ffffff;"></div>
<div class="r" style="left:312px;top:421px;width:398px;height:1px;background:#9a9a9a;"></div>
<div class="t " style="left:314.2px;top:407px;font-size:9.00px;line-height:10px;color:#1a1a1a;letter-spacing:0.181px;">ватой поверхностью</div>
<div class="t " style="left:424.5px;top:407px;font-size:8.86px;line-height:10px;color:#1a1a1a;letter-spacing:0.020px;">-10</div>
<div class="r" style="left:312px;top:424px;width:398px;height:16px;background:#ffffff;"></div>
<div class="r" style="left:312px;top:440px;width:398px;height:1px;background:#9a9a9a;"></div>
<div class="t " style="left:314.2px;top:425px;font-size:8.87px;line-height:10px;color:#1a1a1a;letter-spacing:0.020px;">прослойка и заполнение швов</div>
<div class="r" style="left:312px;top:442px;width:398px;height:16px;background:#ffffff;"></div>
<div class="r" style="left:312px;top:458px;width:398px;height:1px;background:#9a9a9a;"></div>
<div class="t " style="left:314.2px;top:444px;font-size:8.94px;line-height:10px;color:#1a1a1a;letter-spacing:0.020px;">цем. песчан. р-ром марки 300</div>
<div class="t " style="left:443.5px;top:444px;font-size:8.65px;line-height:10px;color:#1a1a1a;letter-spacing:0.020px;">-10</div>
<div class="r" style="left:312px;top:461px;width:398px;height:16px;background:#ffffff;"></div>
<div class="r" style="left:312px;top:477px;width:398px;height:1px;background:#9a9a9a;"></div>
<div class="t " style="left:314.2px;top:462px;font-size:8.78px;line-height:10px;color:#1a1a1a;letter-spacing:0.020px;">2 слоя гидроизола</div>
<div class="t " style="left:421.6px;top:462px;font-size:8.57px;line-height:10px;color:#1a1a1a;letter-spacing:0.020px;">- 5</div>
<div class="r" style="left:312px;top:480px;width:398px;height:16px;background:#ffffff;"></div>
<div class="r" style="left:312px;top:496px;width:398px;height:1px;background:#9a9a9a;"></div>
<div class="t " style="left:314.2px;top:481px;font-size:8.88px;line-height:10px;color:#1a1a1a;letter-spacing:0.020px;">бетон кл. В20</div>
<div class="r" style="left:312px;top:498px;width:398px;height:16px;background:#ffffff;"></div>
<div class="r" style="left:312px;top:514px;width:398px;height:1px;background:#9a9a9a;"></div>
<div class="t " style="left:314.2px;top:500px;font-size:9.00px;line-height:10px;color:#1a1a1a;letter-spacing:0.090px;">утрамбованный грунт</div>
<div class="t" style="left:318px;top:524.500px;font-size:9px;line-height:10px;color:#1f6fc4;font-weight:bold">?</div>
<div class="r" style="left:590.5px;top:521.5px;width:56px;height:17px;background:#fdfdfd;border:1px solid #d2d2d2;border-bottom-color:#bcbcbc;border-radius:3px;"></div>
<div class="t " style="left:612.1px;top:524px;font-size:10.58px;line-height:12px;color:#1a1a1a;letter-spacing:-0.283px;transform:scale(0.8696,1.0000);transform-origin:0 50%;">OK</div>
<div class="r" style="left:653.8px;top:521.5px;width:55.7px;height:17px;background:#fdfdfd;border:1px solid #d2d2d2;border-bottom-color:#bcbcbc;border-radius:3px;"></div>
<div class="t " style="left:665.4px;top:524px;font-size:10.58px;line-height:12px;color:#1a1a1a;letter-spacing:-0.098px;transform:scale(0.8696,1.0000);transform-origin:0 50%;">Отмена</div>
<svg class="r" style="left:0;top:0;z-index:2" width="760" height="560" viewBox="0 0 760 560"><g transform="translate(312.0 330.0) scale(1.00)"><defs><linearGradient id="apg" x1="1" y1="0" x2="0" y2="1"><stop offset="0" stop-color="#5ccbe9"/><stop offset="1" stop-color="#2b87c6"/></linearGradient></defs><path d="M3 0h7.500q1.200 0 1.200 1.200v8l-2.800 3h-8.900v-9.200q0-3 3-3z" fill="url(#apg)"/><path d="M2.200 7.600a3.800 3.800 0 0 1 7.400-1.200l.3 1.400q1.200.2 1.300 1.100l-9.200 0q-.8-.4.200-1.300z" fill="#f4fafd"/><path d="M2 9.600h9" stroke="#d6ecf7" stroke-width="0.800"/></g><path d="M702 331.500l8 8 M710 331.500l-8 8" stroke="#8d8d8d" stroke-width="1"/><rect x="474.500" y="355.500" width="18" height="17" rx="2" fill="#cce4f7" stroke="#99c9ef"/><rect x="574.500" y="355.500" width="18" height="17" rx="2" fill="#cce4f7" stroke="#99c9ef"/><path d="M351.0 357v14" stroke="#a9a9a9" stroke-width="1"/><path d="M432.5 357v14" stroke="#a9a9a9" stroke-width="1"/><path d="M569.0 357v14" stroke="#a9a9a9" stroke-width="1"/><path d="M632.0 357v14" stroke="#a9a9a9" stroke-width="1"/><path d="M315.3 369.200l6.500-5.500h4.500" stroke="#2c5888" stroke-width="1.200" fill="none"/><circle cx="315.3" cy="369.300" r="1" fill="#d8342c"/><path d="M322.5 362l1.700-4 1.700 4 M323.1 360.700h2.200" stroke="#d8342c" stroke-width="0.900" fill="none"/><path d="M322.4 366.700h3.600 M324.2 364.900v3.600" stroke="#d8342c" stroke-width="0.900"/><path d="M333.5 369.200l6.500-5.500h4.500" stroke="#2c5888" stroke-width="1.200" fill="none"/><circle cx="333.5" cy="369.300" r="1" fill="#d8342c"/><path d="M340.7 362l1.700-4 1.700 4 M341.3 360.700h2.200" stroke="#d8342c" stroke-width="0.900" fill="none"/><path d="M340.6 366.500h3.600" stroke="#d8342c" stroke-width="0.900"/><path d="M359.5 369.200l6.500-5.500h4.500" stroke="#2c5888" stroke-width="1.200" fill="none"/><circle cx="359.5" cy="369.300" r="1" fill="#d8342c"/><path d="M365.8 363.700v6.300h6" stroke="#2c5888" stroke-width="1.200" fill="none"/><path d="M367.2 359.300h4 M367.2 361.300h4 M367.5 366h3.500 M367.5 368h3.500" stroke="#d8342c" stroke-width="0.900"/><path d="M377.5 369.200l6.500-5.500h4.500" stroke="#2c5888" stroke-width="1.200" fill="none"/><circle cx="377.5" cy="369.300" r="1" fill="#d8342c"/><path d="M383.8 357.500v12.500h5.500" stroke="#2c5888" stroke-width="1.200" fill="none"/><path d="M385.3 362l1.700-4 1.700 4 M385.9 360.700h2.200" stroke="#d8342c" stroke-width="0.900" fill="none"/><path d="M385.8 365.500h3 M385.8 367.500h3" stroke="#d8342c" stroke-width="0.900"/><path d="M396.5 369.200l6.500-5.500h4.500" stroke="#2c5888" stroke-width="1.200" fill="none"/><circle cx="396.5" cy="369.300" r="1" fill="#d8342c"/><rect x="402.8" y="363.700" width="6" height="6.300" fill="none" stroke="#2c5888" stroke-width="1.100"/><path d="M404.2 359.300h3.500 M404.2 361.300h3.500 M404.5 366.800h2.500" stroke="#d8342c" stroke-width="0.900"/><path d="M415.0 369.200l6.500-5.500h4.500" stroke="#2c5888" stroke-width="1.200" fill="none"/><circle cx="415.0" cy="369.300" r="1" fill="#d8342c"/><path d="M422.2 362l1.700-4 1.700 4 M422.8 360.700h2.200" stroke="#d8342c" stroke-width="0.900" fill="none"/><path d="M422.5 365.500h3 M422.5 367.300h3 M422.5 369.100h3" stroke="#d8342c" stroke-width="0.800"/><path d="M440.5 369.500l11-11" stroke="#2c5888" stroke-width="1.200"/><path d="M459.5 369.500l11-11" stroke="#2c5888" stroke-width="1.200"/><path d="M459.5 369.5l4.500-2-2.500-2.500z" fill="#2c5888"/><path d="M478.2 369.500l11-11" stroke="#2c5888" stroke-width="1.200"/><circle cx="479.7" cy="368.0" r="2.200" fill="#2c5888"/><path d="M496.5 369.500l11-11" stroke="#2c5888" stroke-width="1.200"/><path d="M496.5 369.5v-5 M496.5 369.5h5" stroke="#2c5888" stroke-width="1.200"/><path d="M515.3 369.500l11-11" stroke="#2c5888" stroke-width="1.200"/><path d="M515.3 369.5l1.500-4.500" stroke="#2c5888" stroke-width="1.200"/><path d="M533.5 369.500l11-11" stroke="#2c5888" stroke-width="1.200"/><path d="M534.5 369.5v-5" stroke="#2c5888" stroke-width="1.200"/><path d="M552.3 369.500l11-11" stroke="#2c5888" stroke-width="1.200"/><path d="M552.3 369.5v-6 M552.3 369.5h6" stroke="#2c5888" stroke-width="1.200"/><defs><linearGradient id="algr" x1="0" y1="0" x2="0" y2="1"><stop offset="0.4" stop-color="#ffffff"/><stop offset="1" stop-color="#cfd9e6"/></linearGradient></defs><rect x="577.1" y="358.300" width="12.400" height="11.400" fill="url(#algr)" stroke="#3f6a9c" stroke-width="1.200"/><path d="M579.0 363.200H586.8 M579.0 365.600H584.8" stroke="#e05050" stroke-width="1.500"/><rect x="595.0" y="358.300" width="12.400" height="11.400" fill="url(#algr)" stroke="#3f6a9c" stroke-width="1.200"/><path d="M597.2 363.200H605.2 M598.2 365.600H604.2" stroke="#e05050" stroke-width="1.500"/><rect x="613.6" y="358.300" width="12.400" height="11.400" fill="url(#algr)" stroke="#3f6a9c" stroke-width="1.200"/><path d="M616.3 363.200H624.1 M618.3 365.600H624.1" stroke="#e05050" stroke-width="1.500"/><circle cx="644.700" cy="364" r="4.200" fill="none" stroke="#d8342c" stroke-width="1.200"/><path d="M640.500 369l8.500-10" stroke="#d8342c" stroke-width="1.200"/><path d="M657 359.500q3-1.500 6 0v9q-3-1.500-6 0z M663 359.500q3-1.500 6 0v9q-3-1.500-6 0z" fill="#fff" stroke="#2c5888" stroke-width="1"/><path d="M658.500 362h3 M658.500 364h3 M658.500 366h3 M664.500 362h3 M664.500 364h3 M664.500 366h3" stroke="#7a8bb0" stroke-width="0.700"/><path d="M676 369l6-6 3 3-5 4z" fill="#d83a8c"/><path d="M676 370.500h3v-2h-3z" fill="#e8d020"/><path d="M679 370.500h3v-2h-3z" fill="#28a838"/><path d="M682 363l4.500-5 2 2-4 5z" fill="#2c3c6c"/><path d="M682 370.500h3v-2h-3z" fill="#2a6fd8"/><path d="M695 362.500q6-4.500 13-4" stroke="#2c5888" stroke-width="1.400" fill="none"/><path d="M700.500 361v10" stroke="#2c5888" stroke-width="1.200"/><path d="M701.500 362v8l2-1.800 1.400 3 1.300-.6-1.400-3 2.600-.3z" fill="#111" stroke="#fff" stroke-width="0.400"/><path d="M312 378.500h398" stroke="#b4b4b4" stroke-width="1.400"/><circle cx="320.500" cy="529.500" r="5.700" fill="#d6ecfb" stroke="#4a9be0" stroke-width="1"/><rect x="333" y="523.500" width="9" height="11" fill="#fff" stroke="#3f5f8f"/><rect x="333" y="523.500" width="9" height="2.500" fill="#5b8fd0"/><circle cx="341.500" cy="532" r="3.300" fill="#ddd" stroke="#555"/><circle cx="341.500" cy="532" r="1.200" fill="#777"/><rect x="352.500" y="523.500" width="11" height="11" fill="#fff" stroke="#3f5f8f"/><path d="M354 526h3 M354 528h3" stroke="#555" stroke-width="0.800"/><rect x="358.500" y="529" width="4" height="4" fill="none" stroke="#c44" stroke-width="0.900"/></svg>
<div class="r" style="left:727px;top:149px;width:803px;height:628px;background:#f0f0f0;border-radius:7px;border:1px solid #c4c4c4;box-shadow:0 4px 14px rgba(0,0,0,.55);z-index:4"></div>
<div class="t " style="left:751.7px;top:156px;font-size:9.72px;line-height:11px;color:#1a1a1a;letter-spacing:0.020px;z-index:5;">Записная книжка</div>
<div class="r" style="left:728px;top:174px;width:801px;height:21.5px;background:#f9f9f9;background:linear-gradient(#ffffff,#fbfbfb 50%,#f1f1f1);z-index:5;"></div>
<div class="r" style="left:904.5px;top:174.5px;width:80px;height:19px;background:#ffffff;z-index:5;"></div>
<div class="r" style="left:728px;top:196px;width:388px;height:549px;background:#ffffff;border:1px solid #cfcfcf;border-left:none;z-index:5;"></div>
<div class="r" style="left:1102px;top:198px;width:13px;height:546px;background:#f1f1f1;z-index:5;"></div>
<div class="r" style="left:728px;top:733px;width:374px;height:11px;background:#f1f1f1;z-index:5;"></div>
<div class="r" style="left:1122px;top:196px;width:396px;height:538px;background:#ffffff;z-index:5;"></div>
<div class="r" style="left:1518px;top:196px;width:11px;height:549px;background:#f0f0f0;z-index:5;"></div>
<div class="t " style="left:763.9px;top:200px;font-size:9.13px;line-height:10px;color:#151515;letter-spacing:0.020px;z-index:5;">Записная книжка</div>
<div class="t " style="left:779.3px;top:213px;font-size:8.70px;line-height:10px;color:#151515;letter-spacing:0.020px;z-index:5;">АР, АС</div>
<div class="t " style="left:794.2px;top:226px;font-size:9.02px;line-height:10px;color:#151515;letter-spacing:0.020px;z-index:5;">Заглавный лист</div>
<div class="t " style="left:794.2px;top:239px;font-size:8.73px;line-height:10px;color:#151515;letter-spacing:0.020px;z-index:5;">Планы полов</div>
<div class="t " style="left:794.2px;top:252px;font-size:8.73px;line-height:10px;color:#151515;letter-spacing:0.020px;z-index:5;">Планы фундаментов</div>
<div class="t " style="left:794.2px;top:265px;font-size:8.99px;line-height:10px;color:#151515;letter-spacing:0.020px;z-index:5;">Планы этажей</div>
<div class="t " style="left:794.2px;top:278px;font-size:9.17px;line-height:10px;color:#151515;letter-spacing:0.020px;z-index:5;">Разрезы зданий</div>
<div class="t " style="left:794.2px;top:291px;font-size:8.92px;line-height:10px;color:#151515;letter-spacing:0.020px;z-index:5;">Схема перемычек, карнизных плит</div>
<div class="t " style="left:794.2px;top:304px;font-size:8.90px;line-height:10px;color:#151515;letter-spacing:0.020px;z-index:5;">Схемы щитовых перегородок</div>
<div class="t " style="left:794.2px;top:317px;font-size:9.07px;line-height:10px;color:#151515;letter-spacing:0.020px;z-index:5;">Фасады (кирпичные стены)</div>
<div class="t " style="left:794.2px;top:330px;font-size:9.08px;line-height:10px;color:#151515;letter-spacing:0.020px;z-index:5;">Фасады (стеновы панели)</div>
<div class="t " style="left:794.2px;top:343px;font-size:8.89px;line-height:10px;color:#151515;letter-spacing:0.020px;z-index:5;">Чертежи архитектурных узлов и деталей</div>
<div class="t " style="left:794.2px;top:356px;font-size:8.99px;line-height:10px;color:#151515;letter-spacing:0.020px;z-index:5;">Чертежи деревянных конструкций крыши</div>
<div class="t " style="left:794.2px;top:369px;font-size:9.03px;line-height:10px;color:#151515;letter-spacing:0.020px;z-index:5;">Чертежи металлоконструкций, относящиеся к АР</div>
<div class="t " style="left:779.3px;top:382px;font-size:10.30px;line-height:11px;color:#151515;z-index:5;">КЖ</div>
<div class="t " style="left:794.2px;top:395px;font-size:8.92px;line-height:10px;color:#151515;letter-spacing:0.020px;z-index:5;">Арматурно-опалубочные чертежи ж/б конструкций</div>
<div class="t " style="left:794.2px;top:408px;font-size:8.89px;line-height:10px;color:#151515;letter-spacing:0.020px;z-index:5;">Арматурно-опалубочные чертежи монолитных ж/б конструкций</div>
<div class="t " style="left:794.2px;top:421px;font-size:9.02px;line-height:10px;color:#151515;letter-spacing:0.020px;z-index:5;">Заглавный лист</div>
<div class="t " style="left:794.2px;top:434px;font-size:8.73px;line-height:10px;color:#151515;letter-spacing:0.020px;z-index:5;">Планы фундаментов</div>
<div class="t " style="left:794.2px;top:447px;font-size:8.77px;line-height:10px;color:#151515;letter-spacing:0.020px;z-index:5;">Планы фундаментов на просадочных грунтах</div>
<div class="t " style="left:794.2px;top:460px;font-size:8.74px;line-height:10px;color:#151515;letter-spacing:0.020px;z-index:5;">Планы фундаментов под оборудование</div>
<div class="t " style="left:794.2px;top:473px;font-size:8.98px;line-height:10px;color:#151515;letter-spacing:0.020px;z-index:5;">Схемы лестниц из сборных ж/б элементов</div>
<div class="t " style="left:794.2px;top:486px;font-size:8.81px;line-height:10px;color:#151515;letter-spacing:0.020px;z-index:5;">Схемы стеновых панелей</div>
<div class="t " style="left:794.2px;top:499px;font-size:9.05px;line-height:10px;color:#151515;letter-spacing:0.020px;z-index:5;">Типовые ж/б конструкции с дополнительными закладными деталями</div>
<div class="t " style="left:794.2px;top:512px;font-size:9.09px;line-height:10px;color:#151515;letter-spacing:0.020px;z-index:5;">Чертежи арматурных сеток и каркасов</div>
<div class="t " style="left:794.2px;top:525px;font-size:8.99px;line-height:10px;color:#151515;letter-spacing:0.020px;z-index:5;">Чертежи закладных и соединительных деталей сборных ж/б конструкций</div>
<div class="t " style="left:794.2px;top:538px;font-size:8.99px;line-height:10px;color:#151515;letter-spacing:0.020px;z-index:5;">Чертежи монолитных участков покрытия и перекрытия</div>
<div class="t " style="left:794.2px;top:551px;font-size:9.17px;line-height:10px;color:#151515;letter-spacing:0.020px;z-index:5;">Чертежи монтажных схем сборного ж/б каркаса</div>
<div class="t " style="left:794.2px;top:564px;font-size:9.07px;line-height:10px;color:#151515;letter-spacing:0.020px;z-index:5;">Чертежи монтажных узлов сборных ж/б конструкций</div>
<div class="t " style="left:794.2px;top:577px;font-size:8.85px;line-height:10px;color:#151515;letter-spacing:0.020px;z-index:5;">Чертежи опалубки и армирования фундаментов</div>
<div class="t " style="left:794.2px;top:590px;font-size:9.00px;line-height:10px;color:#151515;letter-spacing:0.020px;z-index:5;">Чертежи схем плит покрытий и перекрытий</div>
<div class="t " style="left:794.2px;top:603px;font-size:8.74px;line-height:10px;color:#151515;letter-spacing:0.020px;z-index:5;">Элементы плана фундаментов</div>
<div class="t " style="left:779.3px;top:616px;font-size:10.30px;line-height:11px;color:#151515;z-index:5;">КМ</div>
<div class="t " style="left:794.2px;top:629px;font-size:9.02px;line-height:10px;color:#151515;letter-spacing:0.020px;z-index:5;">Заглавный лист</div>
<div class="t " style="left:794.2px;top:642px;font-size:8.91px;line-height:10px;color:#151515;letter-spacing:0.020px;z-index:5;">Техническая спецификация металла</div>
<div class="t " style="left:794.2px;top:655px;font-size:9.03px;line-height:10px;color:#151515;letter-spacing:0.020px;z-index:5;">Чертежи монтажных схем металлоконструкций</div>
<div class="t " style="left:794.2px;top:668px;font-size:9.01px;line-height:10px;color:#151515;letter-spacing:0.020px;z-index:5;">Чертежи монтажных узлов металлоконструкций</div>
<div class="t " style="left:794.2px;top:681px;font-size:9.05px;line-height:10px;color:#151515;letter-spacing:0.020px;z-index:5;">Чертежи элементов металлоконструкций</div>
<div class="t " style="left:779.2px;top:694px;font-size:8.89px;line-height:10px;color:#151515;letter-spacing:0.020px;z-index:5;">Конструкции и изделия сооружений и оборудования зданий</div>
<div class="t " style="left:779.2px;top:707px;font-size:8.97px;line-height:10px;color:#151515;letter-spacing:0.020px;z-index:5;">Конструкции, изделия и узлы зданий</div>
<div class="t " style="left:779.0px;top:720px;font-size:8.81px;line-height:10px;color:#151515;letter-spacing:0.020px;z-index:5;">Стальной прокат</div>
<div class="r" style="left:1122px;top:196px;width:395.500px;height:538px;overflow:hidden;z-index:5;font-size:12px;color:#1c1c1c;letter-spacing:-0.175px">
<div class="t" style="left:18.0px;top:1px;line-height:13px">1.</div>
<div class="t" style="left:32.8px;top:1px;line-height:13px">Вертикальная гидроизоляция наружных стен подвала осуществляется путем двух</div>
<div class="t" style="left:3.2px;top:14px;line-height:13px">кратного покрытия горячим битумом.</div>
<div class="t" style="left:18.0px;top:27px;line-height:13px">2.</div>
<div class="t" style="left:32.8px;top:27px;line-height:13px">Все отверстия в фундаментах, после пропуска труб заделать бетоном марки</div>
<div class="t" style="left:18.0px;top:40px;line-height:13px">3.</div>
<div class="t" style="left:32.8px;top:40px;line-height:13px">Горизонтальная гидроизоляция устраивается на отм. ... из 2-х слоев гидроизола на</div>
<div class="t" style="left:6.7px;top:53px;line-height:13px">мастике по выровненной цементным раствором поверхности фундаментов (или из</div>
<div class="t" style="left:3.2px;top:66px;line-height:13px">цементного раствора состава 1:2 толщиной 20мм).</div>
<div class="t" style="left:18.0px;top:78px;line-height:13px">4.</div>
<div class="t" style="left:32.8px;top:78px;line-height:13px">Грунты основания должны быть защищены от увлажнения поверхностными водами и</div>
<div class="t" style="left:6.7px;top:91px;line-height:13px">от промерзания во время строительства.</div>
<div class="t" style="left:18.0px;top:104px;line-height:13px">5.</div>
<div class="t" style="left:32.8px;top:104px;line-height:13px">За условную отметку ±0.000 принят уровень чистого пола первого этажа, что</div>
<div class="t" style="left:3.2px;top:117px;line-height:13px">соответствует абсолютной отметке ... на генплане.</div>
<div class="t" style="left:18.0px;top:130px;line-height:13px">6.</div>
<div class="t" style="left:32.8px;top:130px;line-height:13px">На плане фундаментов в углах здания проставлены отметки: в числителе - отметки</div>
<div class="t" style="left:3.2px;top:143px;line-height:13px">планировочной отметки, в знаменателе - отметки естественного рельефа.</div>
<div class="t" style="left:18.0px;top:156px;line-height:13px">7.</div>
<div class="t" style="left:32.8px;top:156px;line-height:13px">Перед сооружением фундаментов составить акт на скрытые работы о соответствии</div>
<div class="t" style="left:3.2px;top:169px;line-height:13px">грунтов основания, принятым в проекте. В случае обнаружения под подошвой</div>
<div class="t" style="left:3.2px;top:182px;line-height:13px">фундаментов грунтов, отличных от принятых в проекте, необходимо сообщить в</div>
<div class="t" style="left:3.2px;top:195px;line-height:13px">проектную организацию.</div>
<div class="t" style="left:18.0px;top:208px;line-height:13px">8.</div>
<div class="t" style="left:32.8px;top:208px;line-height:13px">По данным инженерно-геологических изысканий основание фундаментов будет</div>
<div class="t" style="left:3.2px;top:221px;line-height:13px">служить ... (наименование грунта) с нормативными характеристиками...</div>
<div class="t" style="left:18.0px;top:234px;line-height:13px">9.</div>
<div class="t" style="left:32.8px;top:234px;line-height:13px">По периметру всего здания устраивается асфальтовая отмостка по щебеночному</div>
<div class="t" style="left:3.2px;top:247px;line-height:13px">основанию (или бутовая по песчаному основанию) шириной ... м.</div>
<div class="t" style="left:18.0px;top:260px;line-height:13px">10.</div>
<div class="t" style="left:49.0px;top:260px;line-height:13px">Посадку здания на местности производить согласно генплана, лист ...</div>
<div class="t" style="left:18.0px;top:273px;line-height:13px">11.</div>
<div class="t" style="left:49.0px;top:273px;line-height:13px">Фундаменты под стены ленточные бутовые из камня марки ... на растворе марки</div>
<div class="t" style="left:3.2px;top:286px;line-height:13px">... (или бутобетонные из бетона марки ... и бутового камня марки ...).</div>
</div>
<div class="t" style="left:741.700px;top:756.500px;font-size:9px;line-height:10px;color:#1f6fc4;font-weight:bold;z-index:6">?</div>
<div class="r" style="left:1466.5px;top:752.5px;width:56px;height:16.5px;background:#fdfdfd;border:1px solid #d2d2d2;border-bottom-color:#bcbcbc;border-radius:3px;z-index:5;"></div>
<div class="t " style="left:1488.0px;top:755px;font-size:10.58px;line-height:12px;color:#1a1a1a;letter-spacing:-0.283px;transform:scale(0.8696,1.0000);transform-origin:0 50%;z-index:5;">OK</div>
<svg class="r" style="left:0;top:0;z-index:5" width="1560" height="800" viewBox="0 0 1560 800"><g transform="translate(734.0 155.3) scale(1.08)"><defs><linearGradient id="apg" x1="1" y1="0" x2="0" y2="1"><stop offset="0" stop-color="#5ccbe9"/><stop offset="1" stop-color="#2b87c6"/></linearGradient></defs><path d="M3 0h7.500q1.200 0 1.200 1.200v8l-2.800 3h-8.900v-9.200q0-3 3-3z" fill="url(#apg)"/><path d="M2.200 7.600a3.800 3.800 0 0 1 7.400-1.200l.3 1.400q1.200.2 1.300 1.100l-9.200 0q-.8-.4.200-1.300z" fill="#f4fafd"/><path d="M2 9.600h9" stroke="#d6ecf7" stroke-width="0.800"/></g><path d="M1433.500 161.500h9" stroke="#222" stroke-width="1"/><rect x="1470.500" y="157.500" width="8" height="8" rx="1" fill="none" stroke="#222" stroke-width="1"/><path d="M1507 157l8.500 8.500 M1515.500 157l-8.500 8.500" stroke="#222" stroke-width="1"/><path d="M731.500 177v14" stroke="#b0b0b0" stroke-width="1.200" stroke-dasharray="1 1.500"/><path d="M774.0 177v14" stroke="#b8b8b8" stroke-width="1"/><path d="M854.0 177v14" stroke="#b8b8b8" stroke-width="1"/><path d="M877.0 177v14" stroke="#b8b8b8" stroke-width="1"/><path d="M901.5 177v14" stroke="#b8b8b8" stroke-width="1"/><path d="M737.500 179.500h4.500l1.500 1.500h6v8h-12z" fill="#f6d56a" stroke="#b88a1c" stroke-width="0.900"/><path d="M737.500 189l2-5.500h11.500l-1.500 5.500z" fill="#fbe9a0" stroke="#b88a1c" stroke-width="0.900"/><path d="M756 178h11l1.500 1.500v10.500h-12.500z" fill="#3a3a3a"/><rect x="758.500" y="178" width="7" height="4" fill="#d9d9d9"/><rect x="758" y="184.500" width="8" height="5.500" fill="#e6c53a"/><path d="M778.500 180l7-3.500 6.500 3.500v6l-6.500 4.500-7-4.500z" fill="#3f78c4" stroke="#1f3f7a" stroke-width="0.800"/><path d="M778.500 183l7 4.500 6.500-4.500" stroke="#d9e6f7" stroke-width="1" fill="none"/><path d="M780 178.500l3-2 1.500 3z" fill="#e8c030"/><rect x="799.5" y="178.500" width="9" height="11" fill="#eaf2fb" stroke="#4a78b4" stroke-width="0.900"/><path d="M801.5 182h5 M801.5 184.500h5 M801.5 187h5" stroke="#4a78b4" stroke-width="0.800"/><path d="M801.0 177l1 2.200 2.200.3-1.600 1.500.4 2.200-2-1.100-2 1.100.4-2.200-1.600-1.500 2.200-.3z" fill="#e8b820"/><rect x="818.3" y="178.500" width="9" height="11" fill="#eaf2fb" stroke="#4a78b4" stroke-width="0.900"/><path d="M820.3 182h5 M820.3 184.500h5 M820.3 187h5" stroke="#4a78b4" stroke-width="0.800"/><path d="M819.8 177l1 2.200 2.200.3-1.600 1.500.4 2.200-2-1.100-2 1.100.4-2.200-1.600-1.500 2.200-.3z" fill="#e8b820"/><path d="M836.500 178.500l10 10.500 M846.500 178.500l-10 10.500" stroke="#d42a20" stroke-width="2.200"/><rect x="860" y="178.500" width="10" height="11" fill="#eaf2fb" stroke="#4a78b4" stroke-width="0.900"/><path d="M862 182h5 M862 184.500h5 M862 187h3" stroke="#4a78b4" stroke-width="0.800"/><path d="M866 185l5.500-7 1.800 1.400-5.500 7-2.300.8z" fill="#e8c030" stroke="#7a5a10" stroke-width="0.500"/><rect x="883" y="178" width="12" height="9" fill="#c85a5a" stroke="#7a2a2a" stroke-width="0.800"/><path d="M883 181h12 M887 178v9 M891 178v9" stroke="#f4dada" stroke-width="0.700"/><path d="M886 187l3 3 M892 187l-2 3.500 M889 186v5" stroke="#4a78b4" stroke-width="0.900"/><circle cx="993" cy="181.500" r="4" fill="#dbeaf8" stroke="#6a8fb8" stroke-width="1.300"/><path d="M996 185l4 4.500" stroke="#8a6a3a" stroke-width="2.200" stroke-linecap="round"/><path d="M1108.500 211v460" stroke="#8a8a8a" stroke-width="1.600"/><path d="M743 738.500h341" stroke="#8a8a8a" stroke-width="1.600"/><rect x="1117.500" y="197.500" width="4" height="547" fill="#f6f6f6" stroke="#7a7a7a" stroke-width="0.800" stroke-dasharray="1 1"/><path d="M1520.500 205.500h7l-3.500-4.500z M1520.500 737h7l-3.500 4.500z" fill="#a0a0a0"/><path d="M1136 739.500h16.500" stroke="#8a8a8a" stroke-width="1.400"/><path d="M753.500 210.6v514.0" stroke="#a8a8a8" stroke-width="1" stroke-dasharray="1 1"/><path d="M769.500 223.6v150.0" stroke="#a8a8a8" stroke-width="1" stroke-dasharray="1 1"/><path d="M769.500 392.6v215.0" stroke="#a8a8a8" stroke-width="1" stroke-dasharray="1 1"/><path d="M769.500 626.6v59.0" stroke="#a8a8a8" stroke-width="1" stroke-dasharray="1 1"/><rect x="734.5" y="201.1" width="7" height="7" rx="1" fill="#fff" stroke="#b4b4b4" stroke-width="0.900"/><path d="M736.0 204.6h4" stroke="#4a6a94" stroke-width="1"/><path d="M742 204.6h5" stroke="#a8a8a8" stroke-width="1" stroke-dasharray="1 1"/><path d="M747.5 199.1v9.500l3 2v-9.500z M751.0 201.1l3-2v9.500l-3 2z M755.5 201.1l3-2v9.500l-3 2z" fill="#eaf2fb" stroke="#1f4f94" stroke-width="0.900"/><path d="M754.3 200.6v9" stroke="#1f4f94" stroke-width="1"/><rect x="750.0" y="214.1" width="7" height="7" rx="1" fill="#fff" stroke="#b4b4b4" stroke-width="0.900"/><path d="M751.5 217.6h4" stroke="#4a6a94" stroke-width="1"/><path d="M757.500 217.6h5" stroke="#a8a8a8" stroke-width="1" stroke-dasharray="1 1"/><path d="M763.5 212.1v9.500l3 2v-9.500z M767.0 214.1l3-2v9.500l-3 2z M771.5 214.1l3-2v9.500l-3 2z" fill="#eaf2fb" stroke="#1f4f94" stroke-width="0.900"/><path d="M770.3 213.6v9" stroke="#1f4f94" stroke-width="1"/><path d="M769.500 230.6h8" stroke="#a8a8a8" stroke-width="1" stroke-dasharray="1 1"/><path d="M779.2 224.3h6l3 3v9.500h-9z" fill="#dcecfb" stroke="#3a7acc" stroke-width="0.900"/><path d="M781.2 229.1h4 M781.2 231.6h5 M781.2 234.1h5" stroke="#3a7acc" stroke-width="0.900"/><path d="M769.500 243.6h8" stroke="#a8a8a8" stroke-width="1" stroke-dasharray="1 1"/><path d="M779.2 237.3h6l3 3v9.500h-9z" fill="#dcecfb" stroke="#3a7acc" stroke-width="0.900"/><path d="M781.2 242.1h4 M781.2 244.6h5 M781.2 247.1h5" stroke="#3a7acc" stroke-width="0.900"/><path d="M769.500 256.6h8" stroke="#a8a8a8" stroke-width="1" stroke-dasharray="1 1"/><path d="M779.2 250.3h6l3 3v9.500h-9z" fill="#dcecfb" stroke="#3a7acc" stroke-width="0.900"/><path d="M781.2 255.1h4 M781.2 257.6h5 M781.2 260.1h5" stroke="#3a7acc" stroke-width="0.900"/><path d="M769.500 269.6h8" stroke="#a8a8a8" stroke-width="1" stroke-dasharray="1 1"/><path d="M779.2 263.3h6l3 3v9.500h-9z" fill="#dcecfb" stroke="#3a7acc" stroke-width="0.900"/><path d="M781.2 268.1h4 M781.2 270.6h5 M781.2 273.1h5" stroke="#3a7acc" stroke-width="0.900"/><path d="M769.500 282.6h8" stroke="#a8a8a8" stroke-width="1" stroke-dasharray="1 1"/><path d="M779.2 276.3h6l3 3v9.500h-9z" fill="#dcecfb" stroke="#3a7acc" stroke-width="0.900"/><path d="M781.2 281.1h4 M781.2 283.6h5 M781.2 286.1h5" stroke="#3a7acc" stroke-width="0.900"/><path d="M769.500 295.6h8" stroke="#a8a8a8" stroke-width="1" stroke-dasharray="1 1"/><path d="M779.2 289.3h6l3 3v9.500h-9z" fill="#dcecfb" stroke="#3a7acc" stroke-width="0.900"/><path d="M781.2 294.1h4 M781.2 296.6h5 M781.2 299.1h5" stroke="#3a7acc" stroke-width="0.900"/><path d="M769.500 308.6h8" stroke="#a8a8a8" stroke-width="1" stroke-dasharray="1 1"/><path d="M779.2 302.3h6l3 3v9.500h-9z" fill="#dcecfb" stroke="#3a7acc" stroke-width="0.900"/><path d="M781.2 307.1h4 M781.2 309.6h5 M781.2 312.1h5" stroke="#3a7acc" stroke-width="0.900"/><path d="M769.500 321.6h8" stroke="#a8a8a8" stroke-width="1" stroke-dasharray="1 1"/><path d="M779.2 315.3h6l3 3v9.500h-9z" fill="#dcecfb" stroke="#3a7acc" stroke-width="0.900"/><path d="M781.2 320.1h4 M781.2 322.6h5 M781.2 325.1h5" stroke="#3a7acc" stroke-width="0.900"/><path d="M769.500 334.6h8" stroke="#a8a8a8" stroke-width="1" stroke-dasharray="1 1"/><path d="M779.2 328.3h6l3 3v9.500h-9z" fill="#dcecfb" stroke="#3a7acc" stroke-width="0.900"/><path d="M781.2 333.1h4 M781.2 335.6h5 M781.2 338.1h5" stroke="#3a7acc" stroke-width="0.900"/><path d="M769.500 347.6h8" stroke="#a8a8a8" stroke-width="1" stroke-dasharray="1 1"/><path d="M779.2 341.3h6l3 3v9.500h-9z" fill="#dcecfb" stroke="#3a7acc" stroke-width="0.900"/><path d="M781.2 346.1h4 M781.2 348.6h5 M781.2 351.1h5" stroke="#3a7acc" stroke-width="0.900"/><path d="M769.500 360.6h8" stroke="#a8a8a8" stroke-width="1" stroke-dasharray="1 1"/><path d="M779.2 354.3h6l3 3v9.500h-9z" fill="#dcecfb" stroke="#3a7acc" stroke-width="0.900"/><path d="M781.2 359.1h4 M781.2 361.6h5 M781.2 364.1h5" stroke="#3a7acc" stroke-width="0.900"/><path d="M769.500 373.6h8" stroke="#a8a8a8" stroke-width="1" stroke-dasharray="1 1"/><path d="M779.2 367.3h6l3 3v9.500h-9z" fill="#dcecfb" stroke="#3a7acc" stroke-width="0.900"/><path d="M781.2 372.1h4 M781.2 374.6h5 M781.2 377.1h5" stroke="#3a7acc" stroke-width="0.900"/><rect x="750.0" y="383.1" width="7" height="7" rx="1" fill="#fff" stroke="#b4b4b4" stroke-width="0.900"/><path d="M751.5 386.6h4" stroke="#4a6a94" stroke-width="1"/><path d="M757.500 386.6h5" stroke="#a8a8a8" stroke-width="1" stroke-dasharray="1 1"/><path d="M763.5 381.1v9.500l3 2v-9.500z M767.0 383.1l3-2v9.500l-3 2z M771.5 383.1l3-2v9.500l-3 2z" fill="#eaf2fb" stroke="#1f4f94" stroke-width="0.900"/><path d="M770.3 382.6v9" stroke="#1f4f94" stroke-width="1"/><path d="M769.500 399.6h8" stroke="#a8a8a8" stroke-width="1" stroke-dasharray="1 1"/><path d="M779.2 393.3h6l3 3v9.500h-9z" fill="#dcecfb" stroke="#3a7acc" stroke-width="0.900"/><path d="M781.2 398.1h4 M781.2 400.6h5 M781.2 403.1h5" stroke="#3a7acc" stroke-width="0.900"/><path d="M769.500 412.6h8" stroke="#a8a8a8" stroke-width="1" stroke-dasharray="1 1"/><path d="M779.2 406.3h6l3 3v9.500h-9z" fill="#dcecfb" stroke="#3a7acc" stroke-width="0.900"/><path d="M781.2 411.1h4 M781.2 413.6h5 M781.2 416.1h5" stroke="#3a7acc" stroke-width="0.900"/><path d="M769.500 425.6h8" stroke="#a8a8a8" stroke-width="1" stroke-dasharray="1 1"/><path d="M779.2 419.3h6l3 3v9.500h-9z" fill="#dcecfb" stroke="#3a7acc" stroke-width="0.900"/><path d="M781.2 424.1h4 M781.2 426.6h5 M781.2 429.1h5" stroke="#3a7acc" stroke-width="0.900"/><path d="M769.500 438.6h8" stroke="#a8a8a8" stroke-width="1" stroke-dasharray="1 1"/><path d="M779.2 432.3h6l3 3v9.500h-9z" fill="#dcecfb" stroke="#3a7acc" stroke-width="0.900"/><path d="M781.2 437.1h4 M781.2 439.6h5 M781.2 442.1h5" stroke="#3a7acc" stroke-width="0.900"/><path d="M769.500 451.6h8" stroke="#a8a8a8" stroke-width="1" stroke-dasharray="1 1"/><path d="M779.2 445.3h6l3 3v9.500h-9z" fill="#dcecfb" stroke="#3a7acc" stroke-width="0.900"/><path d="M781.2 450.1h4 M781.2 452.6h5 M781.2 455.1h5" stroke="#3a7acc" stroke-width="0.900"/><path d="M769.500 464.6h8" stroke="#a8a8a8" stroke-width="1" stroke-dasharray="1 1"/><path d="M779.2 458.3h6l3 3v9.500h-9z" fill="#dcecfb" stroke="#3a7acc" stroke-width="0.900"/><path d="M781.2 463.1h4 M781.2 465.6h5 M781.2 468.1h5" stroke="#3a7acc" stroke-width="0.900"/><path d="M769.500 477.6h8" stroke="#a8a8a8" stroke-width="1" stroke-dasharray="1 1"/><path d="M779.2 471.3h6l3 3v9.500h-9z" fill="#dcecfb" stroke="#3a7acc" stroke-width="0.900"/><path d="M781.2 476.1h4 M781.2 478.6h5 M781.2 481.1h5" stroke="#3a7acc" stroke-width="0.900"/><path d="M769.500 490.6h8" stroke="#a8a8a8" stroke-width="1" stroke-dasharray="1 1"/><path d="M779.2 484.3h6l3 3v9.500h-9z" fill="#dcecfb" stroke="#3a7acc" stroke-width="0.900"/><path d="M781.2 489.1h4 M781.2 491.6h5 M781.2 494.1h5" stroke="#3a7acc" stroke-width="0.900"/><path d="M769.500 503.6h8" stroke="#a8a8a8" stroke-width="1" stroke-dasharray="1 1"/><path d="M779.2 497.3h6l3 3v9.500h-9z" fill="#dcecfb" stroke="#3a7acc" stroke-width="0.900"/><path d="M781.2 502.1h4 M781.2 504.6h5 M781.2 507.1h5" stroke="#3a7acc" stroke-width="0.900"/><path d="M769.500 516.6h8" stroke="#a8a8a8" stroke-width="1" stroke-dasharray="1 1"/><path d="M779.2 510.3h6l3 3v9.500h-9z" fill="#dcecfb" stroke="#3a7acc" stroke-width="0.900"/><path d="M781.2 515.1h4 M781.2 517.6h5 M781.2 520.1h5" stroke="#3a7acc" stroke-width="0.900"/><path d="M769.500 529.6h8" stroke="#a8a8a8" stroke-width="1" stroke-dasharray="1 1"/><path d="M779.2 523.3h6l3 3v9.500h-9z" fill="#dcecfb" stroke="#3a7acc" stroke-width="0.900"/><path d="M781.2 528.1h4 M781.2 530.6h5 M781.2 533.1h5" stroke="#3a7acc" stroke-width="0.900"/><path d="M769.500 542.6h8" stroke="#a8a8a8" stroke-width="1" stroke-dasharray="1 1"/><path d="M779.2 536.3h6l3 3v9.500h-9z" fill="#dcecfb" stroke="#3a7acc" stroke-width="0.900"/><path d="M781.2 541.1h4 M781.2 543.6h5 M781.2 546.1h5" stroke="#3a7acc" stroke-width="0.900"/><path d="M769.500 555.6h8" stroke="#a8a8a8" stroke-width="1" stroke-dasharray="1 1"/><path d="M779.2 549.3h6l3 3v9.500h-9z" fill="#dcecfb" stroke="#3a7acc" stroke-width="0.900"/><path d="M781.2 554.1h4 M781.2 556.6h5 M781.2 559.1h5" stroke="#3a7acc" stroke-width="0.900"/><path d="M769.500 568.6h8" stroke="#a8a8a8" stroke-width="1" stroke-dasharray="1 1"/><path d="M779.2 562.3h6l3 3v9.500h-9z" fill="#dcecfb" stroke="#3a7acc" stroke-width="0.900"/><path d="M781.2 567.1h4 M781.2 569.6h5 M781.2 572.1h5" stroke="#3a7acc" stroke-width="0.900"/><path d="M769.500 581.6h8" stroke="#a8a8a8" stroke-width="1" stroke-dasharray="1 1"/><path d="M779.2 575.3h6l3 3v9.500h-9z" fill="#dcecfb" stroke="#3a7acc" stroke-width="0.900"/><path d="M781.2 580.1h4 M781.2 582.6h5 M781.2 585.1h5" stroke="#3a7acc" stroke-width="0.900"/><path d="M769.500 594.6h8" stroke="#a8a8a8" stroke-width="1" stroke-dasharray="1 1"/><path d="M779.2 588.3h6l3 3v9.500h-9z" fill="#dcecfb" stroke="#3a7acc" stroke-width="0.900"/><path d="M781.2 593.1h4 M781.2 595.6h5 M781.2 598.1h5" stroke="#3a7acc" stroke-width="0.900"/><path d="M769.500 607.6h8" stroke="#a8a8a8" stroke-width="1" stroke-dasharray="1 1"/><path d="M779.2 601.3h6l3 3v9.500h-9z" fill="#dcecfb" stroke="#3a7acc" stroke-width="0.900"/><path d="M781.2 606.1h4 M781.2 608.6h5 M781.2 611.1h5" stroke="#3a7acc" stroke-width="0.900"/><rect x="750.0" y="617.1" width="7" height="7" rx="1" fill="#fff" stroke="#b4b4b4" stroke-width="0.900"/><path d="M751.5 620.6h4" stroke="#4a6a94" stroke-width="1"/><path d="M757.500 620.6h5" stroke="#a8a8a8" stroke-width="1" stroke-dasharray="1 1"/><path d="M763.5 615.1v9.500l3 2v-9.500z M767.0 617.1l3-2v9.500l-3 2z M771.5 617.1l3-2v9.500l-3 2z" fill="#eaf2fb" stroke="#1f4f94" stroke-width="0.900"/><path d="M770.3 616.6v9" stroke="#1f4f94" stroke-width="1"/><path d="M769.500 633.6h8" stroke="#a8a8a8" stroke-width="1" stroke-dasharray="1 1"/><path d="M779.2 627.3h6l3 3v9.500h-9z" fill="#dcecfb" stroke="#3a7acc" stroke-width="0.900"/><path d="M781.2 632.1h4 M781.2 634.6h5 M781.2 637.1h5" stroke="#3a7acc" stroke-width="0.900"/><path d="M769.500 646.6h8" stroke="#a8a8a8" stroke-width="1" stroke-dasharray="1 1"/><path d="M779.2 640.3h6l3 3v9.500h-9z" fill="#dcecfb" stroke="#3a7acc" stroke-width="0.900"/><path d="M781.2 645.1h4 M781.2 647.6h5 M781.2 650.1h5" stroke="#3a7acc" stroke-width="0.900"/><path d="M769.500 659.6h8" stroke="#a8a8a8" stroke-width="1" stroke-dasharray="1 1"/><path d="M779.2 653.3h6l3 3v9.500h-9z" fill="#dcecfb" stroke="#3a7acc" stroke-width="0.900"/><path d="M781.2 658.1h4 M781.2 660.6h5 M781.2 663.1h5" stroke="#3a7acc" stroke-width="0.900"/><path d="M769.500 672.6h8" stroke="#a8a8a8" stroke-width="1" stroke-dasharray="1 1"/><path d="M779.2 666.3h6l3 3v9.500h-9z" fill="#dcecfb" stroke="#3a7acc" stroke-width="0.900"/><path d="M781.2 671.1h4 M781.2 673.6h5 M781.2 676.1h5" stroke="#3a7acc" stroke-width="0.900"/><path d="M769.500 685.6h8" stroke="#a8a8a8" stroke-width="1" stroke-dasharray="1 1"/><path d="M779.2 679.3h6l3 3v9.500h-9z" fill="#dcecfb" stroke="#3a7acc" stroke-width="0.900"/><path d="M781.2 684.1h4 M781.2 686.6h5 M781.2 689.1h5" stroke="#3a7acc" stroke-width="0.900"/><rect x="750.0" y="695.1" width="7" height="7" rx="1" fill="#fff" stroke="#b4b4b4" stroke-width="0.900"/><path d="M751.5 698.6h4" stroke="#4a6a94" stroke-width="1"/><path d="M753.5 696.6v4" stroke="#4a6a94" stroke-width="1"/><path d="M757.500 698.6h5" stroke="#a8a8a8" stroke-width="1" stroke-dasharray="1 1"/><path d="M761.7 697.1l7-3.500 6.500 3.500v4l-6.500 4-7-4z" fill="#3f82cc" stroke="#1f4f94" stroke-width="0.700"/><path d="M761.7 699.8l7 4 6.500-4" stroke="#e6f0fb" stroke-width="1.100" fill="none"/><rect x="750.0" y="708.1" width="7" height="7" rx="1" fill="#fff" stroke="#b4b4b4" stroke-width="0.900"/><path d="M751.5 711.6h4" stroke="#4a6a94" stroke-width="1"/><path d="M753.5 709.6v4" stroke="#4a6a94" stroke-width="1"/><path d="M757.500 711.6h5" stroke="#a8a8a8" stroke-width="1" stroke-dasharray="1 1"/><path d="M761.7 710.1l7-3.500 6.500 3.500v4l-6.500 4-7-4z" fill="#3f82cc" stroke="#1f4f94" stroke-width="0.700"/><path d="M761.7 712.8l7 4 6.500-4" stroke="#e6f0fb" stroke-width="1.100" fill="none"/><rect x="750.0" y="721.1" width="7" height="7" rx="1" fill="#fff" stroke="#b4b4b4" stroke-width="0.900"/><path d="M751.5 724.6h4" stroke="#4a6a94" stroke-width="1"/><path d="M753.5 722.6v4" stroke="#4a6a94" stroke-width="1"/><path d="M757.500 724.6h5" stroke="#a8a8a8" stroke-width="1" stroke-dasharray="1 1"/><path d="M761.7 723.1l7-3.500 6.500 3.500v4l-6.500 4-7-4z" fill="#3f82cc" stroke="#1f4f94" stroke-width="0.700"/><path d="M761.7 725.8l7 4 6.500-4" stroke="#e6f0fb" stroke-width="1.100" fill="none"/><circle cx="744.200" cy="761.500" r="5.700" fill="#d6ecfb" stroke="#4a9be0" stroke-width="1"/></svg>
<div class="r" style="left:286px;top:777px;width:1272px;height:18px;background:#4a4a4a;"></div>
<div class="r" style="left:316.5px;top:778px;width:45.5px;height:15px;background:#767676;"></div>
<div class="t " style="left:322.6px;top:780.0px;font-size:8.70px;line-height:10px;color:#ffffff;letter-spacing:0.020px;font-family:'DejaVu Sans','Liberation Sans',sans-serif;transform:scale(0.9550,1.0000);transform-origin:0 50%;">Модель</div>
<div class="r" style="left:363px;top:778px;width:21px;height:15px;background:#4f4f4f;border:1px solid #626262;border-bottom:none"></div>
<div class="t " style="left:368.0px;top:780.0px;font-size:8.70px;line-height:10px;color:#b8b8b8;letter-spacing:0.020px;font-family:'DejaVu Sans','Liberation Sans',sans-serif;transform:scale(0.9550,1.0000);transform-origin:0 50%;">А4</div>
<div class="r" style="left:385px;top:778px;width:24px;height:15px;background:#4f4f4f;border:1px solid #626262;border-bottom:none"></div>
<div class="t " style="left:391.5px;top:780.0px;font-size:8.70px;line-height:10px;color:#b8b8b8;letter-spacing:0.020px;font-family:'DejaVu Sans','Liberation Sans',sans-serif;transform:scale(0.9550,1.0000);transform-origin:0 50%;">А3</div>
<div class="r" style="left:410px;top:778px;width:23px;height:15px;background:#4f4f4f;border:1px solid #626262;border-bottom:none"></div>
<div class="t " style="left:416.0px;top:780.0px;font-size:8.70px;line-height:10px;color:#b8b8b8;letter-spacing:0.020px;font-family:'DejaVu Sans','Liberation Sans',sans-serif;transform:scale(0.9550,1.0000);transform-origin:0 50%;">А2</div>
<div class="r" style="left:434px;top:778px;width:15.5px;height:15px;background:#4f4f4f;border:1px solid #626262;border-bottom:none"></div>
<div class="t " style="left:436.3px;top:780.0px;font-size:8.70px;line-height:10px;color:#b8b8b8;letter-spacing:0.020px;font-family:'DejaVu Sans','Liberation Sans',sans-serif;transform:scale(0.9550,1.0000);transform-origin:0 50%;">А1</div>
<div class="r" style="left:450.5px;top:778px;width:20.5px;height:15px;background:#4f4f4f;border:1px solid #626262;border-bottom:none"></div>
<div class="t " style="left:455.3px;top:780.0px;font-size:8.70px;line-height:10px;color:#b8b8b8;letter-spacing:0.020px;font-family:'DejaVu Sans','Liberation Sans',sans-serif;transform:scale(0.9550,1.0000);transform-origin:0 50%;">А0</div>
<div class="r" style="left:1px;top:794px;width:1557px;height:1px;background:#6c6c6c;"></div>
<div class="r" style="left:1px;top:795px;width:1557px;height:61px;background:#5c5c5c;background:linear-gradient(#525252,#5c5c5c 6px);"></div>
<div class="r" style="left:1px;top:799px;width:15px;height:56px;background:#7a7a7a;"></div>
<div class="r" style="left:16px;top:842px;width:1542px;height:1px;background:#6a6a6a;"></div>
<div class="r" style="left:16px;top:843px;width:1542px;height:13px;background:#5a5a5a;"></div>
<div class="t" style="left:3.500px;top:853px;font-size:9px;line-height:10px;color:#c9c9c9;transform-origin:0 0;transform:rotate(-90deg);width:22px;overflow:hidden">Кома</div>
<div class="t " style="left:18.3px;top:808px;font-size:9.42px;line-height:11px;color:#f2f2f2;letter-spacing:0.020px;font-family:'Liberation Mono',monospace;">*Отмена*</div>
<div class="t " style="left:18.3px;top:820px;font-size:9.42px;line-height:11px;color:#f2f2f2;letter-spacing:0.020px;font-family:'Liberation Mono',monospace;">Команда: DEdit</div>
<div class="t " style="left:18.3px;top:831px;font-size:9.42px;line-height:11px;color:#f2f2f2;letter-spacing:0.020px;font-family:'Liberation Mono',monospace;">dedit - редактирование</div>
<div class="t " style="left:18.3px;top:844px;font-size:9.42px;line-height:11px;color:#f2f2f2;letter-spacing:0.020px;font-family:'Liberation Mono',monospace;">Команда:</div>
<div class="r" style="left:1px;top:856px;width:1557px;height:19px;background:#4a4a4a;"></div>
<div class="r" style="left:4px;top:857px;width:107px;height:16px;overflow:hidden;z-index:3"><div class="t" style="left:0;top:2px;font-size:9.500px;line-height:12px;color:#e4e4e4;letter-spacing:-0.150px">79213.9056,26099.0642,0.0000</div></div>
<div class="t " style="left:124.0px;top:861px;font-size:9.30px;line-height:10px;color:#dcdcdc;letter-spacing:0.020px;transform:scale(0.9615,1.0000);transform-origin:0 50%;">ШАГ</div>
<div class="t " style="left:157.0px;top:861px;font-size:9.28px;line-height:10px;color:#dcdcdc;letter-spacing:-0.416px;transform:scale(0.9615,1.0000);transform-origin:0 50%;">СЕТКА</div>
<div class="r" style="left:191px;top:857px;width:63.5px;height:16.5px;background:#515f7a;border:1px solid #7391c4;"></div>
<div class="t " style="left:197.0px;top:861px;font-size:9.28px;line-height:10px;color:#f2f2f2;letter-spacing:-0.160px;transform:scale(0.9615,1.0000);transform-origin:0 50%;">оПРИВЯЗКА</div>
<div class="r" style="left:254.5px;top:857px;width:79px;height:16.5px;background:#515f7a;border:1px solid #7391c4;"></div>
<div class="t " style="left:262.0px;top:861px;font-size:9.28px;line-height:10px;color:#f2f2f2;letter-spacing:-0.240px;transform:scale(0.9615,1.0000);transform-origin:0 50%;">3D оПРИВЯЗКА</div>
<div class="r" style="left:333.5px;top:857px;width:69px;height:16.5px;background:#515f7a;border:1px solid #7391c4;"></div>
<div class="t " style="left:341.0px;top:861px;font-size:9.28px;line-height:10px;color:#f2f2f2;letter-spacing:-0.518px;transform:scale(0.9615,1.0000);transform-origin:0 50%;">ОТС-ОБЪЕКТ</div>
<div class="r" style="left:402.5px;top:857px;width:65px;height:16.5px;background:#515f7a;border:1px solid #7391c4;"></div>
<div class="t " style="left:410.0px;top:861px;font-size:9.28px;line-height:10px;color:#f2f2f2;letter-spacing:-0.383px;transform:scale(0.9615,1.0000);transform-origin:0 50%;">ОТС-ПОЛЯР</div>
<div class="t " style="left:475.5px;top:861px;font-size:9.28px;line-height:10px;color:#dcdcdc;letter-spacing:-0.256px;transform:scale(0.9615,1.0000);transform-origin:0 50%;">ОРТО</div>
<div class="r" style="left:506px;top:857px;width:61.5px;height:16.5px;background:#515f7a;border:1px solid #7391c4;"></div>
<div class="t " style="left:514.0px;top:861px;font-size:9.33px;line-height:10px;color:#f2f2f2;letter-spacing:0.020px;transform:scale(0.9615,1.0000);transform-origin:0 50%;">ДИН-ВВОД</div>
<div class="t " style="left:575.0px;top:861px;font-size:9.28px;line-height:10px;color:#dcdcdc;letter-spacing:-0.224px;transform:scale(0.9615,1.0000);transform-origin:0 50%;">ИЗО</div>
<div class="r" style="left:604px;top:857px;width:30px;height:16.5px;background:#515f7a;border:1px solid #7391c4;"></div>
<div class="t " style="left:611.5px;top:861px;font-size:9.28px;line-height:10px;color:#f2f2f2;letter-spacing:-1.161px;transform:scale(0.9615,1.0000);transform-origin:0 50%;">ВЕС</div>
<div class="r" style="left:634px;top:857px;width:67px;height:16.5px;background:#515f7a;border:1px solid #7391c4;"></div>
<div class="t " style="left:641.5px;top:861px;font-size:9.28px;line-height:10px;color:#f2f2f2;letter-spacing:-0.427px;transform:scale(0.9615,1.0000);transform-origin:0 50%;">ШТРИХОВКА</div>
<div class="r" style="left:604.5px;top:858px;width:0px;height:0px;background:none;"></div>
<div class="t " style="left:1049.5px;top:861px;font-size:9.28px;line-height:10px;color:#e4e4e4;letter-spacing:-0.067px;transform:scale(0.9615,1.0000);transform-origin:0 50%;">МОДЕЛЬ</div>
<div class="t " style="left:1325.0px;top:861px;font-size:9.35px;line-height:10px;color:#e4e4e4;letter-spacing:0.020px;transform:scale(0.9615,1.0000);transform-origin:0 50%;">m1:100</div>
<svg class="r" style="left:0;top:0;z-index:2" width="1560" height="877" viewBox="0 0 1560 877"><rect x="288.500" y="779.500" width="13" height="12" fill="#2f3f5a" stroke="#d8d8d8" stroke-width="1"/><path d="M289 783.500h12 M289 787.500h12" stroke="#d8d8d8"/><rect x="289" y="780" width="12" height="3" fill="#5d9be0"/><path d="M5 803.500l6.500 6.500 M11.500 803.500l-6.500 6.500" stroke="#fff" stroke-width="1.500"/><path d="M6.500 818.500h4 M7.500 818.500v4 M9.800 818.500v4 M5.500 822.500h6.500 M8.700 822.500v3.500" stroke="#fff" stroke-width="1.100" fill="none"/><path d="M600.500 858v15" stroke="#5e5e5e"/><path d="M1088.0 858v15" stroke="#5e5e5e"/><path d="M1197.5 858v15" stroke="#5e5e5e"/><path d="M1214.5 858v15" stroke="#5e5e5e"/><path d="M1375.5 858v15" stroke="#5e5e5e"/><path d="M1399.5 858v15" stroke="#5e5e5e"/><path d="M1422.5 858v15" stroke="#5e5e5e"/><path d="M1447.5 858v15" stroke="#5e5e5e"/><path d="M1471.0 858v15" stroke="#5e5e5e"/><path d="M1493.5 858v15" stroke="#5e5e5e"/><path d="M1518.0 858v15" stroke="#5e5e5e"/><path d="M1535.5 858v15" stroke="#5e5e5e"/><g stroke="#bdbdbd" stroke-width="1" fill="none"><rect x="1091.500" y="866.500" width="4" height="3.500" rx="1"/><path d="M1092.500 866.500v-1.500a1.500 1.500 0 0 1 3 0"/><rect x="1097.500" y="863.500" width="4" height="3.500" rx="1"/><path d="M1098.500 863.500v-1.500a1.500 1.500 0 0 1 3 0v1"/></g><rect x="1108.500" y="860.500" width="9.500" height="8.500" fill="#e4e4e4" stroke="#888"/><path d="M1110.500 869.500h6l-3 3z" fill="#fff"/><circle cx="1203" cy="862.500" r="3" fill="#f0e8c0"/><rect x="1201.500" y="865" width="3" height="2.500" fill="#ccc"/><rect x="1200" y="861" width="9" height="9" fill="none" stroke="#aaa" stroke-dasharray="1.500 1"/><path transform="translate(1206.0 864.0) scale(0.80)" d="M0 0v8.500l2.200-2 1.600 3.300 1.400-.7-1.600-3.200 3-.3z" fill="#f4f4f4"/><path d="M1222.500 859a3.700 3.700 0 0 1 2.300 6.600v2h-4.600v-2a3.700 3.700 0 0 1 2.300-6.600z" fill="#d8d8d8"/><rect x="1220.700" y="868.500" width="3.600" height="2.500" fill="#9a9a9a"/><rect x="1232.500" y="857.500" width="24" height="16" fill="#52607a" stroke="#7d9cd0"/><rect x="1256.500" y="857.500" width="23" height="16" fill="#52607a" stroke="#7d9cd0"/><circle cx="1246" cy="865.500" r="5.500" fill="none" stroke="#d03030" stroke-width="1.400"/><path transform="translate(1244.5 861.5) scale(0.70)" d="M0 0v8.500l2.200-2 1.600 3.300 1.400-.7-1.600-3.200 3-.3z" fill="#eee"/><path transform="translate(1263.5 859.0) scale(1.00)" d="M0 0v8.500l2.200-2 1.600 3.300 1.400-.7-1.600-3.200 3-.3z" fill="#f4f4f4"/><rect x="1269.500" y="866.500" width="6" height="5" fill="#e8e8e8" stroke="#666" stroke-width="0.700"/><path d="M1270.500 868.500h4 M1270.500 870h4" stroke="#555" stroke-width="0.600"/><path d="M1289.500 859v12.500h10" stroke="#d8d8d8" stroke-width="1.100" fill="none"/><path d="M1287.500 861l2-2 2 2 M1297.500 869.500l2 2-2 2" stroke="#d8d8d8" fill="none"/><path d="M1296 859.500l-2.500 4h1.800l-1.200 4 3.200-5h-1.800l1.400-3z" fill="#d8d8d8"/><path d="M1385 871.500c-2.500-1.500-4.500-4.500-5-6.200-.3-1 .8-1.500 1.500-.6l1.500 2v-5.700c0-1.200 1.600-1.200 1.600 0v3.500-5c0-1.200 1.700-1.200 1.700 0v4.800-4.300c0-1.200 1.700-1.200 1.700 0v4.600-2.800c0-1.100 1.600-1.100 1.600 0v5.700c0 1.800-.6 2.800-1.300 4z" fill="#f4f4f4" stroke="#4a4a4a" stroke-width="0.400"/><circle cx="1411.500" cy="863.500" r="3.800" fill="#e6f0fa" stroke="#f4f4f4" stroke-width="1.200"/><path d="M1414.500 866.500l4 4.500" stroke="#5d9be0" stroke-width="2" stroke-linecap="round"/><rect x="1430.500" y="858.500" width="13.500" height="13.500" fill="#6aa7ea"/><circle cx="1436.500" cy="864.500" r="3.200" fill="none" stroke="#fff" stroke-width="1.200"/><path d="M1439 867l3.500 3.500" stroke="#fff" stroke-width="1.400"/><path d="M1465 859.500h-10.500v9.500h5" stroke="#6aa7ea" stroke-width="1.200" fill="none"/><circle cx="1462.500" cy="866.500" r="2.800" fill="none" stroke="#e4e4e4" stroke-width="1"/><path d="M1464.500 868.500l3 3" stroke="#e4e4e4" stroke-width="1.200"/><ellipse cx="1484.500" cy="866.500" rx="6" ry="3" fill="none" stroke="#cfcfcf" stroke-width="1"/><path d="M1484.500 860v11.500" stroke="#cfcfcf"/><circle cx="1484.500" cy="860.500" r="1" fill="#cfcfcf"/><circle cx="1507.500" cy="865.500" r="4.600" fill="none" stroke="#96d052" stroke-width="2.200"/><path d="M1510.500 859l3.500 1.500-3 2.500z M1504.500 872l-3.500-1.500 3-2.500z" fill="#96d052"/><path d="M1520 865v-5h9.500v3" stroke="#cfcfcf" stroke-width="1.100" fill="none"/><rect x="1524.500" y="865.500" width="7" height="5.500" fill="#e4e4e4"/><path d="M1526 865.500v-1.500a2 2 0 0 1 4 0v1.500" stroke="#e4e4e4" fill="none"/><rect x="1545.500" y="861.500" width="9" height="7.500" fill="#1c9be0" stroke="#bfe0f7" stroke-width="1"/><path d="M1543 862v-2.500h2.500 M1554.500 859.500h2.500v2.500 M1557 868.500v2.500h-2.500 M1545.500 871h-2.500v-2.500" stroke="#e4e4e4" fill="none"/></svg>
</body></html>
